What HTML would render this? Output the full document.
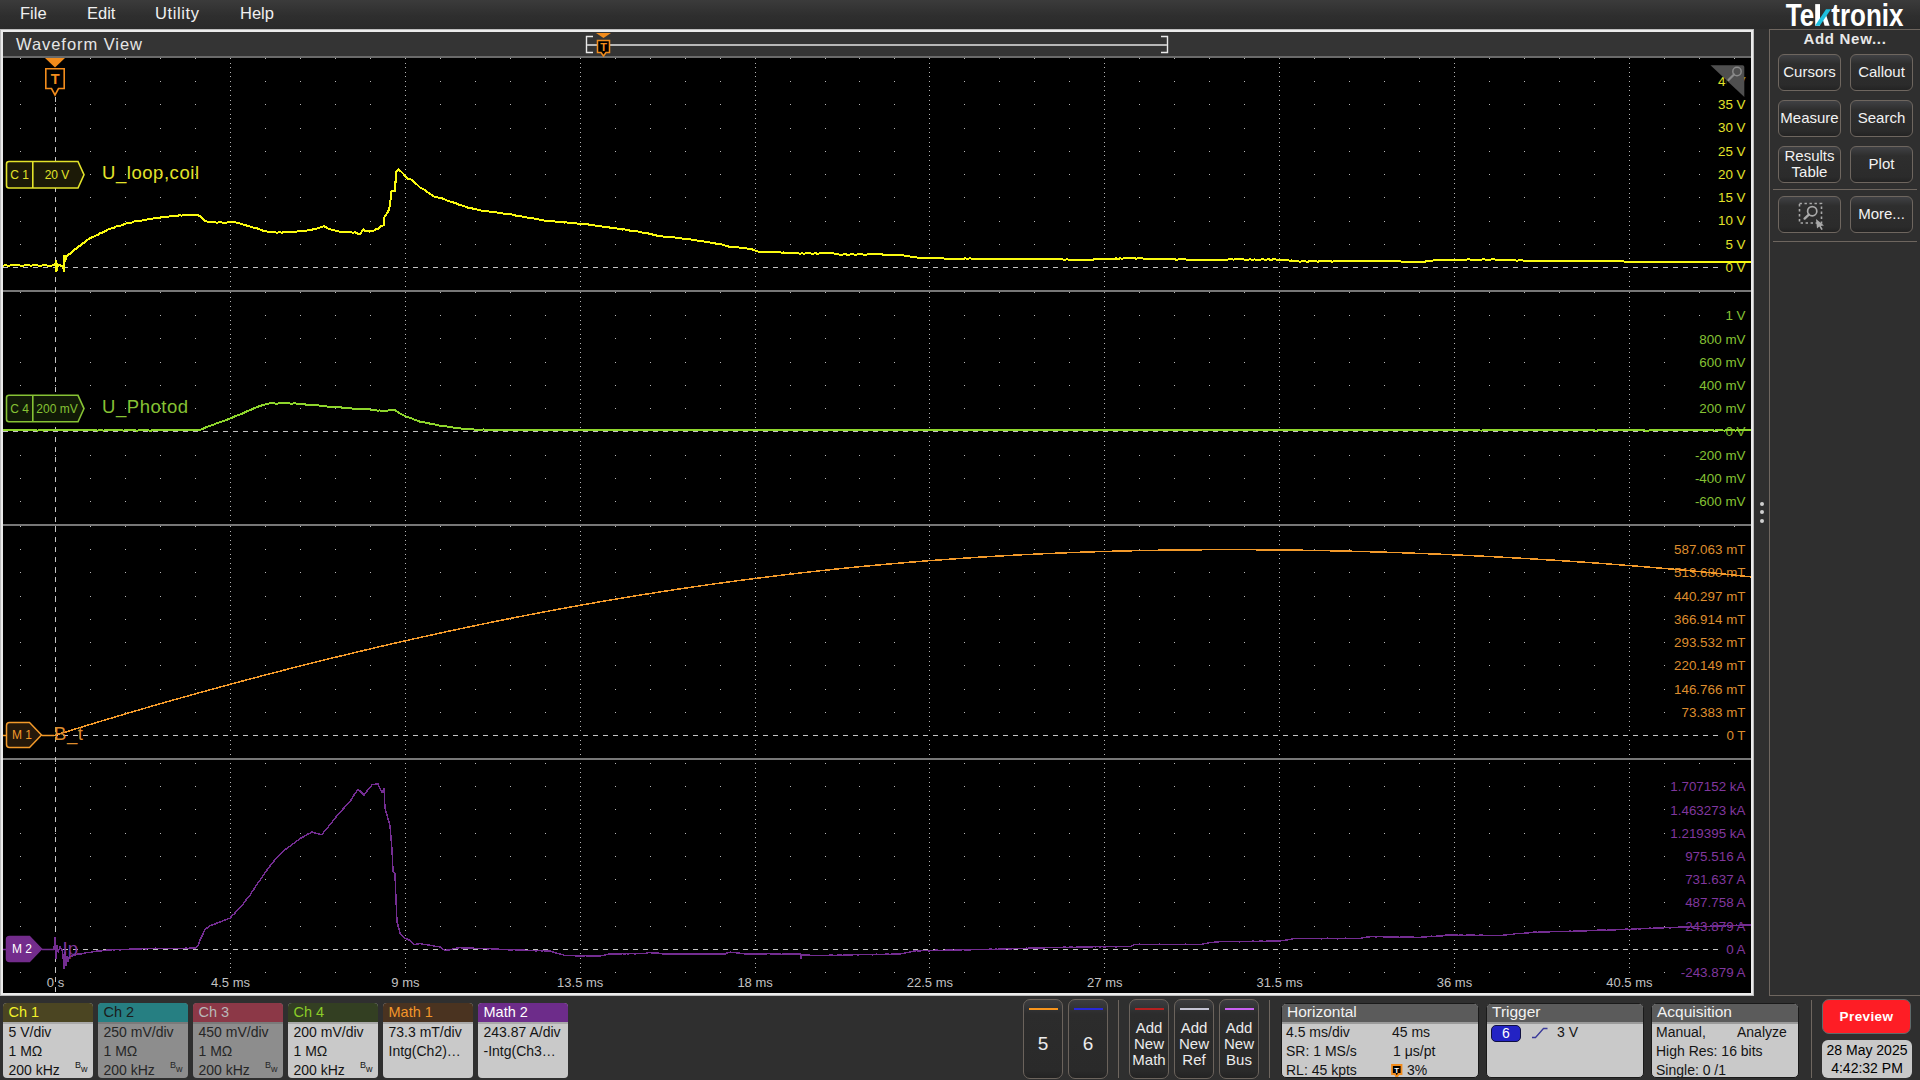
<!DOCTYPE html>
<html><head><meta charset="utf-8"><title>Tektronix Waveform View</title>
<style>
html,body{margin:0;padding:0}
body{width:1920px;height:1080px;background:#2f2f2f;position:relative;overflow:hidden;font-family:"Liberation Sans",sans-serif;color:#000}
.a{position:absolute}
.menu{left:0;top:0;width:1920px;height:29px;background:linear-gradient(#3b3b3b,#2e2e2e 55%,#2a2a2a)}
.mi{top:4px;font-size:16.5px;color:#f0f0f0}

.sbtn{width:63px;height:37px;box-sizing:border-box;border:1px solid #6e665f;border-radius:6px;background:linear-gradient(#404144 0px,#2e2e2e 9px,#2b2b2b 30px,#222 36px);color:#f2f2f2;font-size:15px;text-align:center}
.chb{top:1003px;width:90px;height:75px;border-radius:4px;overflow:hidden;color:#141414;font-size:14px}
.chh{position:absolute;left:0;top:0;width:90px;height:19px;padding-left:5.5px;box-sizing:border-box;line-height:18px;font-size:14.5px}
.chl{position:absolute;left:0;top:19px;width:90px;height:2px}
.chr{position:absolute;left:5.5px;line-height:19px;white-space:nowrap}
.bw{position:absolute;left:72px;top:58px;font-size:9px;line-height:9px}
.bw span{position:relative;top:4px;left:0px}
.abtn{top:999px;width:40px;height:80px;box-sizing:border-box;border:1px solid #6b635c;border-radius:7px;background:linear-gradient(#3c3d40 0px,#2c2c2c 14px,#2a2a2a 70px,#222 79px);color:#ececec;font-size:15px;text-align:center}
.abl{position:absolute;left:4.5px;top:7.5px;width:29px;height:2px}
.ip{top:1003px;height:75px;border-radius:5px;overflow:hidden;background:#c9c9c9;color:#141414;font-size:14px;border:1px solid #1a1a1a;box-sizing:border-box}
.iph{position:absolute;left:0;top:0;right:0;height:18px;background:#5b5b5b;color:#f2f2f2;font-size:15.5px;line-height:15px;padding-left:5px}
.ipl{position:absolute;left:0;top:18px;right:0;height:1.5px;background:#9a9a9a}
.ipr{position:absolute;line-height:19px;white-space:nowrap}
</style></head><body>
<div class="a menu"></div>
<div class="a mi" style="left:20px">File</div>
<div class="a mi" style="left:87px">Edit</div>
<div class="a mi" style="left:155px;letter-spacing:0.6px">Utility</div>
<div class="a mi" style="left:240px">Help</div>
<svg class="a" style="left:0;top:0" width="1920" height="1080" font-family='"Liberation Sans", sans-serif'>
<rect x="0" y="29" width="1754" height="967" fill="#bdbdbd"/>
<rect x="1" y="30" width="1752" height="965" fill="#ebebeb"/>
<rect x="3" y="32" width="1748" height="24" fill="#343434"/>
<rect x="3" y="56" width="1748" height="2" fill="#6a6a6a"/>
<rect x="3" y="58" width="1748" height="935" fill="#000"/>
<text x="16" y="49.5" fill="#e6e6e6" font-size="16.5" letter-spacing="0.95">Waveform View</text>
<path d="M593 36.5H586.5V52.5H593" fill="none" stroke="#e8e8e8" stroke-width="1.4"/>
<path d="M1161 36.5H1167.5V52.5H1161" fill="none" stroke="#e8e8e8" stroke-width="1.4"/>
<rect x="587" y="44" width="580" height="2" fill="#b8b8b8"/>
<path d="M596 33H611L603.5 38Z" fill="#f28c1c"/>
<path d="M597.5 40.5H609.5V52.5H606L603.5 56L601 52.5H597.5Z" fill="#000" stroke="#f28c1c" stroke-width="1.5"/>
<text x="603.5" y="51" fill="#f28c1c" font-size="11" font-weight="bold" text-anchor="middle">T</text>
<path d="M20 58h1v1h-1zM20 81h1v1h-1zM20 104h1v1h-1zM20 128h1v1h-1zM20 151h1v1h-1zM20 174h1v1h-1zM20 197h1v1h-1zM20 221h1v1h-1zM20 244h1v1h-1zM20 267h1v1h-1zM20 290h1v1h-1zM20 292h1v1h-1zM20 315h1v1h-1zM20 338h1v1h-1zM20 362h1v1h-1zM20 385h1v1h-1zM20 408h1v1h-1zM20 431h1v1h-1zM20 455h1v1h-1zM20 478h1v1h-1zM20 501h1v1h-1zM20 524h1v1h-1zM20 526h1v1h-1zM20 549h1v1h-1zM20 572h1v1h-1zM20 596h1v1h-1zM20 619h1v1h-1zM20 642h1v1h-1zM20 665h1v1h-1zM20 689h1v1h-1zM20 712h1v1h-1zM20 735h1v1h-1zM20 758h1v1h-1zM20 763h1v1h-1zM20 786h1v1h-1zM20 809h1v1h-1zM20 833h1v1h-1zM20 856h1v1h-1zM20 879h1v1h-1zM20 902h1v1h-1zM20 926h1v1h-1zM20 949h1v1h-1zM20 972h1v1h-1zM55 58h1v1h-1zM55 81h1v1h-1zM55 104h1v1h-1zM55 128h1v1h-1zM55 151h1v1h-1zM55 174h1v1h-1zM55 197h1v1h-1zM55 221h1v1h-1zM55 244h1v1h-1zM55 267h1v1h-1zM55 290h1v1h-1zM55 292h1v1h-1zM55 315h1v1h-1zM55 338h1v1h-1zM55 362h1v1h-1zM55 385h1v1h-1zM55 408h1v1h-1zM55 431h1v1h-1zM55 455h1v1h-1zM55 478h1v1h-1zM55 501h1v1h-1zM55 524h1v1h-1zM55 526h1v1h-1zM55 549h1v1h-1zM55 572h1v1h-1zM55 596h1v1h-1zM55 619h1v1h-1zM55 642h1v1h-1zM55 665h1v1h-1zM55 689h1v1h-1zM55 712h1v1h-1zM55 735h1v1h-1zM55 758h1v1h-1zM55 763h1v1h-1zM55 786h1v1h-1zM55 809h1v1h-1zM55 833h1v1h-1zM55 856h1v1h-1zM55 879h1v1h-1zM55 902h1v1h-1zM55 926h1v1h-1zM55 949h1v1h-1zM55 972h1v1h-1zM90 58h1v1h-1zM90 81h1v1h-1zM90 104h1v1h-1zM90 128h1v1h-1zM90 151h1v1h-1zM90 174h1v1h-1zM90 197h1v1h-1zM90 221h1v1h-1zM90 244h1v1h-1zM90 267h1v1h-1zM90 290h1v1h-1zM90 292h1v1h-1zM90 315h1v1h-1zM90 338h1v1h-1zM90 362h1v1h-1zM90 385h1v1h-1zM90 408h1v1h-1zM90 431h1v1h-1zM90 455h1v1h-1zM90 478h1v1h-1zM90 501h1v1h-1zM90 524h1v1h-1zM90 526h1v1h-1zM90 549h1v1h-1zM90 572h1v1h-1zM90 596h1v1h-1zM90 619h1v1h-1zM90 642h1v1h-1zM90 665h1v1h-1zM90 689h1v1h-1zM90 712h1v1h-1zM90 735h1v1h-1zM90 758h1v1h-1zM90 763h1v1h-1zM90 786h1v1h-1zM90 809h1v1h-1zM90 833h1v1h-1zM90 856h1v1h-1zM90 879h1v1h-1zM90 902h1v1h-1zM90 926h1v1h-1zM90 949h1v1h-1zM90 972h1v1h-1zM125 58h1v1h-1zM125 81h1v1h-1zM125 104h1v1h-1zM125 128h1v1h-1zM125 151h1v1h-1zM125 174h1v1h-1zM125 197h1v1h-1zM125 221h1v1h-1zM125 244h1v1h-1zM125 267h1v1h-1zM125 290h1v1h-1zM125 292h1v1h-1zM125 315h1v1h-1zM125 338h1v1h-1zM125 362h1v1h-1zM125 385h1v1h-1zM125 408h1v1h-1zM125 431h1v1h-1zM125 455h1v1h-1zM125 478h1v1h-1zM125 501h1v1h-1zM125 524h1v1h-1zM125 526h1v1h-1zM125 549h1v1h-1zM125 572h1v1h-1zM125 596h1v1h-1zM125 619h1v1h-1zM125 642h1v1h-1zM125 665h1v1h-1zM125 689h1v1h-1zM125 712h1v1h-1zM125 735h1v1h-1zM125 758h1v1h-1zM125 763h1v1h-1zM125 786h1v1h-1zM125 809h1v1h-1zM125 833h1v1h-1zM125 856h1v1h-1zM125 879h1v1h-1zM125 902h1v1h-1zM125 926h1v1h-1zM125 949h1v1h-1zM125 972h1v1h-1zM160 58h1v1h-1zM160 81h1v1h-1zM160 104h1v1h-1zM160 128h1v1h-1zM160 151h1v1h-1zM160 174h1v1h-1zM160 197h1v1h-1zM160 221h1v1h-1zM160 244h1v1h-1zM160 267h1v1h-1zM160 290h1v1h-1zM160 292h1v1h-1zM160 315h1v1h-1zM160 338h1v1h-1zM160 362h1v1h-1zM160 385h1v1h-1zM160 408h1v1h-1zM160 431h1v1h-1zM160 455h1v1h-1zM160 478h1v1h-1zM160 501h1v1h-1zM160 524h1v1h-1zM160 526h1v1h-1zM160 549h1v1h-1zM160 572h1v1h-1zM160 596h1v1h-1zM160 619h1v1h-1zM160 642h1v1h-1zM160 665h1v1h-1zM160 689h1v1h-1zM160 712h1v1h-1zM160 735h1v1h-1zM160 758h1v1h-1zM160 763h1v1h-1zM160 786h1v1h-1zM160 809h1v1h-1zM160 833h1v1h-1zM160 856h1v1h-1zM160 879h1v1h-1zM160 902h1v1h-1zM160 926h1v1h-1zM160 949h1v1h-1zM160 972h1v1h-1zM195 58h1v1h-1zM195 81h1v1h-1zM195 104h1v1h-1zM195 128h1v1h-1zM195 151h1v1h-1zM195 174h1v1h-1zM195 197h1v1h-1zM195 221h1v1h-1zM195 244h1v1h-1zM195 267h1v1h-1zM195 290h1v1h-1zM195 292h1v1h-1zM195 315h1v1h-1zM195 338h1v1h-1zM195 362h1v1h-1zM195 385h1v1h-1zM195 408h1v1h-1zM195 431h1v1h-1zM195 455h1v1h-1zM195 478h1v1h-1zM195 501h1v1h-1zM195 524h1v1h-1zM195 526h1v1h-1zM195 549h1v1h-1zM195 572h1v1h-1zM195 596h1v1h-1zM195 619h1v1h-1zM195 642h1v1h-1zM195 665h1v1h-1zM195 689h1v1h-1zM195 712h1v1h-1zM195 735h1v1h-1zM195 758h1v1h-1zM195 763h1v1h-1zM195 786h1v1h-1zM195 809h1v1h-1zM195 833h1v1h-1zM195 856h1v1h-1zM195 879h1v1h-1zM195 902h1v1h-1zM195 926h1v1h-1zM195 949h1v1h-1zM195 972h1v1h-1zM230 58h1v1h-1zM230 63h1v1h-1zM230 67h1v1h-1zM230 72h1v1h-1zM230 76h1v1h-1zM230 81h1v1h-1zM230 86h1v1h-1zM230 90h1v1h-1zM230 95h1v1h-1zM230 100h1v1h-1zM230 104h1v1h-1zM230 109h1v1h-1zM230 114h1v1h-1zM230 118h1v1h-1zM230 123h1v1h-1zM230 128h1v1h-1zM230 132h1v1h-1zM230 137h1v1h-1zM230 142h1v1h-1zM230 146h1v1h-1zM230 151h1v1h-1zM230 155h1v1h-1zM230 160h1v1h-1zM230 165h1v1h-1zM230 169h1v1h-1zM230 174h1v1h-1zM230 179h1v1h-1zM230 183h1v1h-1zM230 188h1v1h-1zM230 193h1v1h-1zM230 197h1v1h-1zM230 202h1v1h-1zM230 207h1v1h-1zM230 211h1v1h-1zM230 216h1v1h-1zM230 221h1v1h-1zM230 225h1v1h-1zM230 230h1v1h-1zM230 234h1v1h-1zM230 239h1v1h-1zM230 244h1v1h-1zM230 248h1v1h-1zM230 253h1v1h-1zM230 258h1v1h-1zM230 262h1v1h-1zM230 267h1v1h-1zM230 272h1v1h-1zM230 276h1v1h-1zM230 281h1v1h-1zM230 286h1v1h-1zM230 290h1v1h-1zM230 292h1v1h-1zM230 297h1v1h-1zM230 301h1v1h-1zM230 306h1v1h-1zM230 310h1v1h-1zM230 315h1v1h-1zM230 320h1v1h-1zM230 324h1v1h-1zM230 329h1v1h-1zM230 334h1v1h-1zM230 338h1v1h-1zM230 343h1v1h-1zM230 348h1v1h-1zM230 352h1v1h-1zM230 357h1v1h-1zM230 362h1v1h-1zM230 366h1v1h-1zM230 371h1v1h-1zM230 376h1v1h-1zM230 380h1v1h-1zM230 385h1v1h-1zM230 389h1v1h-1zM230 394h1v1h-1zM230 399h1v1h-1zM230 403h1v1h-1zM230 408h1v1h-1zM230 413h1v1h-1zM230 417h1v1h-1zM230 422h1v1h-1zM230 427h1v1h-1zM230 431h1v1h-1zM230 436h1v1h-1zM230 441h1v1h-1zM230 445h1v1h-1zM230 450h1v1h-1zM230 455h1v1h-1zM230 459h1v1h-1zM230 464h1v1h-1zM230 468h1v1h-1zM230 473h1v1h-1zM230 478h1v1h-1zM230 482h1v1h-1zM230 487h1v1h-1zM230 492h1v1h-1zM230 496h1v1h-1zM230 501h1v1h-1zM230 506h1v1h-1zM230 510h1v1h-1zM230 515h1v1h-1zM230 520h1v1h-1zM230 524h1v1h-1zM230 526h1v1h-1zM230 531h1v1h-1zM230 535h1v1h-1zM230 540h1v1h-1zM230 544h1v1h-1zM230 549h1v1h-1zM230 554h1v1h-1zM230 558h1v1h-1zM230 563h1v1h-1zM230 568h1v1h-1zM230 572h1v1h-1zM230 577h1v1h-1zM230 582h1v1h-1zM230 586h1v1h-1zM230 591h1v1h-1zM230 596h1v1h-1zM230 600h1v1h-1zM230 605h1v1h-1zM230 610h1v1h-1zM230 614h1v1h-1zM230 619h1v1h-1zM230 623h1v1h-1zM230 628h1v1h-1zM230 633h1v1h-1zM230 637h1v1h-1zM230 642h1v1h-1zM230 647h1v1h-1zM230 651h1v1h-1zM230 656h1v1h-1zM230 661h1v1h-1zM230 665h1v1h-1zM230 670h1v1h-1zM230 675h1v1h-1zM230 679h1v1h-1zM230 684h1v1h-1zM230 689h1v1h-1zM230 693h1v1h-1zM230 698h1v1h-1zM230 702h1v1h-1zM230 707h1v1h-1zM230 712h1v1h-1zM230 716h1v1h-1zM230 721h1v1h-1zM230 726h1v1h-1zM230 730h1v1h-1zM230 735h1v1h-1zM230 740h1v1h-1zM230 744h1v1h-1zM230 749h1v1h-1zM230 754h1v1h-1zM230 758h1v1h-1zM230 763h1v1h-1zM230 768h1v1h-1zM230 772h1v1h-1zM230 777h1v1h-1zM230 782h1v1h-1zM230 786h1v1h-1zM230 791h1v1h-1zM230 796h1v1h-1zM230 800h1v1h-1zM230 805h1v1h-1zM230 809h1v1h-1zM230 814h1v1h-1zM230 819h1v1h-1zM230 823h1v1h-1zM230 828h1v1h-1zM230 833h1v1h-1zM230 837h1v1h-1zM230 842h1v1h-1zM230 847h1v1h-1zM230 851h1v1h-1zM230 856h1v1h-1zM230 861h1v1h-1zM230 865h1v1h-1zM230 870h1v1h-1zM230 875h1v1h-1zM230 879h1v1h-1zM230 884h1v1h-1zM230 888h1v1h-1zM230 893h1v1h-1zM230 898h1v1h-1zM230 902h1v1h-1zM230 907h1v1h-1zM230 912h1v1h-1zM230 916h1v1h-1zM230 921h1v1h-1zM230 926h1v1h-1zM230 930h1v1h-1zM230 935h1v1h-1zM230 940h1v1h-1zM230 944h1v1h-1zM230 949h1v1h-1zM230 953h1v1h-1zM230 958h1v1h-1zM230 963h1v1h-1zM230 967h1v1h-1zM230 972h1v1h-1zM265 58h1v1h-1zM265 81h1v1h-1zM265 104h1v1h-1zM265 128h1v1h-1zM265 151h1v1h-1zM265 174h1v1h-1zM265 197h1v1h-1zM265 221h1v1h-1zM265 244h1v1h-1zM265 267h1v1h-1zM265 290h1v1h-1zM265 292h1v1h-1zM265 315h1v1h-1zM265 338h1v1h-1zM265 362h1v1h-1zM265 385h1v1h-1zM265 408h1v1h-1zM265 431h1v1h-1zM265 455h1v1h-1zM265 478h1v1h-1zM265 501h1v1h-1zM265 524h1v1h-1zM265 526h1v1h-1zM265 549h1v1h-1zM265 572h1v1h-1zM265 596h1v1h-1zM265 619h1v1h-1zM265 642h1v1h-1zM265 665h1v1h-1zM265 689h1v1h-1zM265 712h1v1h-1zM265 735h1v1h-1zM265 758h1v1h-1zM265 763h1v1h-1zM265 786h1v1h-1zM265 809h1v1h-1zM265 833h1v1h-1zM265 856h1v1h-1zM265 879h1v1h-1zM265 902h1v1h-1zM265 926h1v1h-1zM265 949h1v1h-1zM265 972h1v1h-1zM300 58h1v1h-1zM300 81h1v1h-1zM300 104h1v1h-1zM300 128h1v1h-1zM300 151h1v1h-1zM300 174h1v1h-1zM300 197h1v1h-1zM300 221h1v1h-1zM300 244h1v1h-1zM300 267h1v1h-1zM300 290h1v1h-1zM300 292h1v1h-1zM300 315h1v1h-1zM300 338h1v1h-1zM300 362h1v1h-1zM300 385h1v1h-1zM300 408h1v1h-1zM300 431h1v1h-1zM300 455h1v1h-1zM300 478h1v1h-1zM300 501h1v1h-1zM300 524h1v1h-1zM300 526h1v1h-1zM300 549h1v1h-1zM300 572h1v1h-1zM300 596h1v1h-1zM300 619h1v1h-1zM300 642h1v1h-1zM300 665h1v1h-1zM300 689h1v1h-1zM300 712h1v1h-1zM300 735h1v1h-1zM300 758h1v1h-1zM300 763h1v1h-1zM300 786h1v1h-1zM300 809h1v1h-1zM300 833h1v1h-1zM300 856h1v1h-1zM300 879h1v1h-1zM300 902h1v1h-1zM300 926h1v1h-1zM300 949h1v1h-1zM300 972h1v1h-1zM335 58h1v1h-1zM335 81h1v1h-1zM335 104h1v1h-1zM335 128h1v1h-1zM335 151h1v1h-1zM335 174h1v1h-1zM335 197h1v1h-1zM335 221h1v1h-1zM335 244h1v1h-1zM335 267h1v1h-1zM335 290h1v1h-1zM335 292h1v1h-1zM335 315h1v1h-1zM335 338h1v1h-1zM335 362h1v1h-1zM335 385h1v1h-1zM335 408h1v1h-1zM335 431h1v1h-1zM335 455h1v1h-1zM335 478h1v1h-1zM335 501h1v1h-1zM335 524h1v1h-1zM335 526h1v1h-1zM335 549h1v1h-1zM335 572h1v1h-1zM335 596h1v1h-1zM335 619h1v1h-1zM335 642h1v1h-1zM335 665h1v1h-1zM335 689h1v1h-1zM335 712h1v1h-1zM335 735h1v1h-1zM335 758h1v1h-1zM335 763h1v1h-1zM335 786h1v1h-1zM335 809h1v1h-1zM335 833h1v1h-1zM335 856h1v1h-1zM335 879h1v1h-1zM335 902h1v1h-1zM335 926h1v1h-1zM335 949h1v1h-1zM335 972h1v1h-1zM370 58h1v1h-1zM370 81h1v1h-1zM370 104h1v1h-1zM370 128h1v1h-1zM370 151h1v1h-1zM370 174h1v1h-1zM370 197h1v1h-1zM370 221h1v1h-1zM370 244h1v1h-1zM370 267h1v1h-1zM370 290h1v1h-1zM370 292h1v1h-1zM370 315h1v1h-1zM370 338h1v1h-1zM370 362h1v1h-1zM370 385h1v1h-1zM370 408h1v1h-1zM370 431h1v1h-1zM370 455h1v1h-1zM370 478h1v1h-1zM370 501h1v1h-1zM370 524h1v1h-1zM370 526h1v1h-1zM370 549h1v1h-1zM370 572h1v1h-1zM370 596h1v1h-1zM370 619h1v1h-1zM370 642h1v1h-1zM370 665h1v1h-1zM370 689h1v1h-1zM370 712h1v1h-1zM370 735h1v1h-1zM370 758h1v1h-1zM370 763h1v1h-1zM370 786h1v1h-1zM370 809h1v1h-1zM370 833h1v1h-1zM370 856h1v1h-1zM370 879h1v1h-1zM370 902h1v1h-1zM370 926h1v1h-1zM370 949h1v1h-1zM370 972h1v1h-1zM405 58h1v1h-1zM405 63h1v1h-1zM405 67h1v1h-1zM405 72h1v1h-1zM405 76h1v1h-1zM405 81h1v1h-1zM405 86h1v1h-1zM405 90h1v1h-1zM405 95h1v1h-1zM405 100h1v1h-1zM405 104h1v1h-1zM405 109h1v1h-1zM405 114h1v1h-1zM405 118h1v1h-1zM405 123h1v1h-1zM405 128h1v1h-1zM405 132h1v1h-1zM405 137h1v1h-1zM405 142h1v1h-1zM405 146h1v1h-1zM405 151h1v1h-1zM405 155h1v1h-1zM405 160h1v1h-1zM405 165h1v1h-1zM405 169h1v1h-1zM405 174h1v1h-1zM405 179h1v1h-1zM405 183h1v1h-1zM405 188h1v1h-1zM405 193h1v1h-1zM405 197h1v1h-1zM405 202h1v1h-1zM405 207h1v1h-1zM405 211h1v1h-1zM405 216h1v1h-1zM405 221h1v1h-1zM405 225h1v1h-1zM405 230h1v1h-1zM405 234h1v1h-1zM405 239h1v1h-1zM405 244h1v1h-1zM405 248h1v1h-1zM405 253h1v1h-1zM405 258h1v1h-1zM405 262h1v1h-1zM405 267h1v1h-1zM405 272h1v1h-1zM405 276h1v1h-1zM405 281h1v1h-1zM405 286h1v1h-1zM405 290h1v1h-1zM405 292h1v1h-1zM405 297h1v1h-1zM405 301h1v1h-1zM405 306h1v1h-1zM405 310h1v1h-1zM405 315h1v1h-1zM405 320h1v1h-1zM405 324h1v1h-1zM405 329h1v1h-1zM405 334h1v1h-1zM405 338h1v1h-1zM405 343h1v1h-1zM405 348h1v1h-1zM405 352h1v1h-1zM405 357h1v1h-1zM405 362h1v1h-1zM405 366h1v1h-1zM405 371h1v1h-1zM405 376h1v1h-1zM405 380h1v1h-1zM405 385h1v1h-1zM405 389h1v1h-1zM405 394h1v1h-1zM405 399h1v1h-1zM405 403h1v1h-1zM405 408h1v1h-1zM405 413h1v1h-1zM405 417h1v1h-1zM405 422h1v1h-1zM405 427h1v1h-1zM405 431h1v1h-1zM405 436h1v1h-1zM405 441h1v1h-1zM405 445h1v1h-1zM405 450h1v1h-1zM405 455h1v1h-1zM405 459h1v1h-1zM405 464h1v1h-1zM405 468h1v1h-1zM405 473h1v1h-1zM405 478h1v1h-1zM405 482h1v1h-1zM405 487h1v1h-1zM405 492h1v1h-1zM405 496h1v1h-1zM405 501h1v1h-1zM405 506h1v1h-1zM405 510h1v1h-1zM405 515h1v1h-1zM405 520h1v1h-1zM405 524h1v1h-1zM405 526h1v1h-1zM405 531h1v1h-1zM405 535h1v1h-1zM405 540h1v1h-1zM405 544h1v1h-1zM405 549h1v1h-1zM405 554h1v1h-1zM405 558h1v1h-1zM405 563h1v1h-1zM405 568h1v1h-1zM405 572h1v1h-1zM405 577h1v1h-1zM405 582h1v1h-1zM405 586h1v1h-1zM405 591h1v1h-1zM405 596h1v1h-1zM405 600h1v1h-1zM405 605h1v1h-1zM405 610h1v1h-1zM405 614h1v1h-1zM405 619h1v1h-1zM405 623h1v1h-1zM405 628h1v1h-1zM405 633h1v1h-1zM405 637h1v1h-1zM405 642h1v1h-1zM405 647h1v1h-1zM405 651h1v1h-1zM405 656h1v1h-1zM405 661h1v1h-1zM405 665h1v1h-1zM405 670h1v1h-1zM405 675h1v1h-1zM405 679h1v1h-1zM405 684h1v1h-1zM405 689h1v1h-1zM405 693h1v1h-1zM405 698h1v1h-1zM405 702h1v1h-1zM405 707h1v1h-1zM405 712h1v1h-1zM405 716h1v1h-1zM405 721h1v1h-1zM405 726h1v1h-1zM405 730h1v1h-1zM405 735h1v1h-1zM405 740h1v1h-1zM405 744h1v1h-1zM405 749h1v1h-1zM405 754h1v1h-1zM405 758h1v1h-1zM405 763h1v1h-1zM405 768h1v1h-1zM405 772h1v1h-1zM405 777h1v1h-1zM405 782h1v1h-1zM405 786h1v1h-1zM405 791h1v1h-1zM405 796h1v1h-1zM405 800h1v1h-1zM405 805h1v1h-1zM405 809h1v1h-1zM405 814h1v1h-1zM405 819h1v1h-1zM405 823h1v1h-1zM405 828h1v1h-1zM405 833h1v1h-1zM405 837h1v1h-1zM405 842h1v1h-1zM405 847h1v1h-1zM405 851h1v1h-1zM405 856h1v1h-1zM405 861h1v1h-1zM405 865h1v1h-1zM405 870h1v1h-1zM405 875h1v1h-1zM405 879h1v1h-1zM405 884h1v1h-1zM405 888h1v1h-1zM405 893h1v1h-1zM405 898h1v1h-1zM405 902h1v1h-1zM405 907h1v1h-1zM405 912h1v1h-1zM405 916h1v1h-1zM405 921h1v1h-1zM405 926h1v1h-1zM405 930h1v1h-1zM405 935h1v1h-1zM405 940h1v1h-1zM405 944h1v1h-1zM405 949h1v1h-1zM405 953h1v1h-1zM405 958h1v1h-1zM405 963h1v1h-1zM405 967h1v1h-1zM405 972h1v1h-1zM440 58h1v1h-1zM440 81h1v1h-1zM440 104h1v1h-1zM440 128h1v1h-1zM440 151h1v1h-1zM440 174h1v1h-1zM440 197h1v1h-1zM440 221h1v1h-1zM440 244h1v1h-1zM440 267h1v1h-1zM440 290h1v1h-1zM440 292h1v1h-1zM440 315h1v1h-1zM440 338h1v1h-1zM440 362h1v1h-1zM440 385h1v1h-1zM440 408h1v1h-1zM440 431h1v1h-1zM440 455h1v1h-1zM440 478h1v1h-1zM440 501h1v1h-1zM440 524h1v1h-1zM440 526h1v1h-1zM440 549h1v1h-1zM440 572h1v1h-1zM440 596h1v1h-1zM440 619h1v1h-1zM440 642h1v1h-1zM440 665h1v1h-1zM440 689h1v1h-1zM440 712h1v1h-1zM440 735h1v1h-1zM440 758h1v1h-1zM440 763h1v1h-1zM440 786h1v1h-1zM440 809h1v1h-1zM440 833h1v1h-1zM440 856h1v1h-1zM440 879h1v1h-1zM440 902h1v1h-1zM440 926h1v1h-1zM440 949h1v1h-1zM440 972h1v1h-1zM475 58h1v1h-1zM475 81h1v1h-1zM475 104h1v1h-1zM475 128h1v1h-1zM475 151h1v1h-1zM475 174h1v1h-1zM475 197h1v1h-1zM475 221h1v1h-1zM475 244h1v1h-1zM475 267h1v1h-1zM475 290h1v1h-1zM475 292h1v1h-1zM475 315h1v1h-1zM475 338h1v1h-1zM475 362h1v1h-1zM475 385h1v1h-1zM475 408h1v1h-1zM475 431h1v1h-1zM475 455h1v1h-1zM475 478h1v1h-1zM475 501h1v1h-1zM475 524h1v1h-1zM475 526h1v1h-1zM475 549h1v1h-1zM475 572h1v1h-1zM475 596h1v1h-1zM475 619h1v1h-1zM475 642h1v1h-1zM475 665h1v1h-1zM475 689h1v1h-1zM475 712h1v1h-1zM475 735h1v1h-1zM475 758h1v1h-1zM475 763h1v1h-1zM475 786h1v1h-1zM475 809h1v1h-1zM475 833h1v1h-1zM475 856h1v1h-1zM475 879h1v1h-1zM475 902h1v1h-1zM475 926h1v1h-1zM475 949h1v1h-1zM475 972h1v1h-1zM510 58h1v1h-1zM510 81h1v1h-1zM510 104h1v1h-1zM510 128h1v1h-1zM510 151h1v1h-1zM510 174h1v1h-1zM510 197h1v1h-1zM510 221h1v1h-1zM510 244h1v1h-1zM510 267h1v1h-1zM510 290h1v1h-1zM510 292h1v1h-1zM510 315h1v1h-1zM510 338h1v1h-1zM510 362h1v1h-1zM510 385h1v1h-1zM510 408h1v1h-1zM510 431h1v1h-1zM510 455h1v1h-1zM510 478h1v1h-1zM510 501h1v1h-1zM510 524h1v1h-1zM510 526h1v1h-1zM510 549h1v1h-1zM510 572h1v1h-1zM510 596h1v1h-1zM510 619h1v1h-1zM510 642h1v1h-1zM510 665h1v1h-1zM510 689h1v1h-1zM510 712h1v1h-1zM510 735h1v1h-1zM510 758h1v1h-1zM510 763h1v1h-1zM510 786h1v1h-1zM510 809h1v1h-1zM510 833h1v1h-1zM510 856h1v1h-1zM510 879h1v1h-1zM510 902h1v1h-1zM510 926h1v1h-1zM510 949h1v1h-1zM510 972h1v1h-1zM545 58h1v1h-1zM545 81h1v1h-1zM545 104h1v1h-1zM545 128h1v1h-1zM545 151h1v1h-1zM545 174h1v1h-1zM545 197h1v1h-1zM545 221h1v1h-1zM545 244h1v1h-1zM545 267h1v1h-1zM545 290h1v1h-1zM545 292h1v1h-1zM545 315h1v1h-1zM545 338h1v1h-1zM545 362h1v1h-1zM545 385h1v1h-1zM545 408h1v1h-1zM545 431h1v1h-1zM545 455h1v1h-1zM545 478h1v1h-1zM545 501h1v1h-1zM545 524h1v1h-1zM545 526h1v1h-1zM545 549h1v1h-1zM545 572h1v1h-1zM545 596h1v1h-1zM545 619h1v1h-1zM545 642h1v1h-1zM545 665h1v1h-1zM545 689h1v1h-1zM545 712h1v1h-1zM545 735h1v1h-1zM545 758h1v1h-1zM545 763h1v1h-1zM545 786h1v1h-1zM545 809h1v1h-1zM545 833h1v1h-1zM545 856h1v1h-1zM545 879h1v1h-1zM545 902h1v1h-1zM545 926h1v1h-1zM545 949h1v1h-1zM545 972h1v1h-1zM580 58h1v1h-1zM580 63h1v1h-1zM580 67h1v1h-1zM580 72h1v1h-1zM580 76h1v1h-1zM580 81h1v1h-1zM580 86h1v1h-1zM580 90h1v1h-1zM580 95h1v1h-1zM580 100h1v1h-1zM580 104h1v1h-1zM580 109h1v1h-1zM580 114h1v1h-1zM580 118h1v1h-1zM580 123h1v1h-1zM580 128h1v1h-1zM580 132h1v1h-1zM580 137h1v1h-1zM580 142h1v1h-1zM580 146h1v1h-1zM580 151h1v1h-1zM580 155h1v1h-1zM580 160h1v1h-1zM580 165h1v1h-1zM580 169h1v1h-1zM580 174h1v1h-1zM580 179h1v1h-1zM580 183h1v1h-1zM580 188h1v1h-1zM580 193h1v1h-1zM580 197h1v1h-1zM580 202h1v1h-1zM580 207h1v1h-1zM580 211h1v1h-1zM580 216h1v1h-1zM580 221h1v1h-1zM580 225h1v1h-1zM580 230h1v1h-1zM580 234h1v1h-1zM580 239h1v1h-1zM580 244h1v1h-1zM580 248h1v1h-1zM580 253h1v1h-1zM580 258h1v1h-1zM580 262h1v1h-1zM580 267h1v1h-1zM580 272h1v1h-1zM580 276h1v1h-1zM580 281h1v1h-1zM580 286h1v1h-1zM580 290h1v1h-1zM580 292h1v1h-1zM580 297h1v1h-1zM580 301h1v1h-1zM580 306h1v1h-1zM580 310h1v1h-1zM580 315h1v1h-1zM580 320h1v1h-1zM580 324h1v1h-1zM580 329h1v1h-1zM580 334h1v1h-1zM580 338h1v1h-1zM580 343h1v1h-1zM580 348h1v1h-1zM580 352h1v1h-1zM580 357h1v1h-1zM580 362h1v1h-1zM580 366h1v1h-1zM580 371h1v1h-1zM580 376h1v1h-1zM580 380h1v1h-1zM580 385h1v1h-1zM580 389h1v1h-1zM580 394h1v1h-1zM580 399h1v1h-1zM580 403h1v1h-1zM580 408h1v1h-1zM580 413h1v1h-1zM580 417h1v1h-1zM580 422h1v1h-1zM580 427h1v1h-1zM580 431h1v1h-1zM580 436h1v1h-1zM580 441h1v1h-1zM580 445h1v1h-1zM580 450h1v1h-1zM580 455h1v1h-1zM580 459h1v1h-1zM580 464h1v1h-1zM580 468h1v1h-1zM580 473h1v1h-1zM580 478h1v1h-1zM580 482h1v1h-1zM580 487h1v1h-1zM580 492h1v1h-1zM580 496h1v1h-1zM580 501h1v1h-1zM580 506h1v1h-1zM580 510h1v1h-1zM580 515h1v1h-1zM580 520h1v1h-1zM580 524h1v1h-1zM580 526h1v1h-1zM580 531h1v1h-1zM580 535h1v1h-1zM580 540h1v1h-1zM580 544h1v1h-1zM580 549h1v1h-1zM580 554h1v1h-1zM580 558h1v1h-1zM580 563h1v1h-1zM580 568h1v1h-1zM580 572h1v1h-1zM580 577h1v1h-1zM580 582h1v1h-1zM580 586h1v1h-1zM580 591h1v1h-1zM580 596h1v1h-1zM580 600h1v1h-1zM580 605h1v1h-1zM580 610h1v1h-1zM580 614h1v1h-1zM580 619h1v1h-1zM580 623h1v1h-1zM580 628h1v1h-1zM580 633h1v1h-1zM580 637h1v1h-1zM580 642h1v1h-1zM580 647h1v1h-1zM580 651h1v1h-1zM580 656h1v1h-1zM580 661h1v1h-1zM580 665h1v1h-1zM580 670h1v1h-1zM580 675h1v1h-1zM580 679h1v1h-1zM580 684h1v1h-1zM580 689h1v1h-1zM580 693h1v1h-1zM580 698h1v1h-1zM580 702h1v1h-1zM580 707h1v1h-1zM580 712h1v1h-1zM580 716h1v1h-1zM580 721h1v1h-1zM580 726h1v1h-1zM580 730h1v1h-1zM580 735h1v1h-1zM580 740h1v1h-1zM580 744h1v1h-1zM580 749h1v1h-1zM580 754h1v1h-1zM580 758h1v1h-1zM580 763h1v1h-1zM580 768h1v1h-1zM580 772h1v1h-1zM580 777h1v1h-1zM580 782h1v1h-1zM580 786h1v1h-1zM580 791h1v1h-1zM580 796h1v1h-1zM580 800h1v1h-1zM580 805h1v1h-1zM580 809h1v1h-1zM580 814h1v1h-1zM580 819h1v1h-1zM580 823h1v1h-1zM580 828h1v1h-1zM580 833h1v1h-1zM580 837h1v1h-1zM580 842h1v1h-1zM580 847h1v1h-1zM580 851h1v1h-1zM580 856h1v1h-1zM580 861h1v1h-1zM580 865h1v1h-1zM580 870h1v1h-1zM580 875h1v1h-1zM580 879h1v1h-1zM580 884h1v1h-1zM580 888h1v1h-1zM580 893h1v1h-1zM580 898h1v1h-1zM580 902h1v1h-1zM580 907h1v1h-1zM580 912h1v1h-1zM580 916h1v1h-1zM580 921h1v1h-1zM580 926h1v1h-1zM580 930h1v1h-1zM580 935h1v1h-1zM580 940h1v1h-1zM580 944h1v1h-1zM580 949h1v1h-1zM580 953h1v1h-1zM580 958h1v1h-1zM580 963h1v1h-1zM580 967h1v1h-1zM580 972h1v1h-1zM615 58h1v1h-1zM615 81h1v1h-1zM615 104h1v1h-1zM615 128h1v1h-1zM615 151h1v1h-1zM615 174h1v1h-1zM615 197h1v1h-1zM615 221h1v1h-1zM615 244h1v1h-1zM615 267h1v1h-1zM615 290h1v1h-1zM615 292h1v1h-1zM615 315h1v1h-1zM615 338h1v1h-1zM615 362h1v1h-1zM615 385h1v1h-1zM615 408h1v1h-1zM615 431h1v1h-1zM615 455h1v1h-1zM615 478h1v1h-1zM615 501h1v1h-1zM615 524h1v1h-1zM615 526h1v1h-1zM615 549h1v1h-1zM615 572h1v1h-1zM615 596h1v1h-1zM615 619h1v1h-1zM615 642h1v1h-1zM615 665h1v1h-1zM615 689h1v1h-1zM615 712h1v1h-1zM615 735h1v1h-1zM615 758h1v1h-1zM615 763h1v1h-1zM615 786h1v1h-1zM615 809h1v1h-1zM615 833h1v1h-1zM615 856h1v1h-1zM615 879h1v1h-1zM615 902h1v1h-1zM615 926h1v1h-1zM615 949h1v1h-1zM615 972h1v1h-1zM650 58h1v1h-1zM650 81h1v1h-1zM650 104h1v1h-1zM650 128h1v1h-1zM650 151h1v1h-1zM650 174h1v1h-1zM650 197h1v1h-1zM650 221h1v1h-1zM650 244h1v1h-1zM650 267h1v1h-1zM650 290h1v1h-1zM650 292h1v1h-1zM650 315h1v1h-1zM650 338h1v1h-1zM650 362h1v1h-1zM650 385h1v1h-1zM650 408h1v1h-1zM650 431h1v1h-1zM650 455h1v1h-1zM650 478h1v1h-1zM650 501h1v1h-1zM650 524h1v1h-1zM650 526h1v1h-1zM650 549h1v1h-1zM650 572h1v1h-1zM650 596h1v1h-1zM650 619h1v1h-1zM650 642h1v1h-1zM650 665h1v1h-1zM650 689h1v1h-1zM650 712h1v1h-1zM650 735h1v1h-1zM650 758h1v1h-1zM650 763h1v1h-1zM650 786h1v1h-1zM650 809h1v1h-1zM650 833h1v1h-1zM650 856h1v1h-1zM650 879h1v1h-1zM650 902h1v1h-1zM650 926h1v1h-1zM650 949h1v1h-1zM650 972h1v1h-1zM685 58h1v1h-1zM685 81h1v1h-1zM685 104h1v1h-1zM685 128h1v1h-1zM685 151h1v1h-1zM685 174h1v1h-1zM685 197h1v1h-1zM685 221h1v1h-1zM685 244h1v1h-1zM685 267h1v1h-1zM685 290h1v1h-1zM685 292h1v1h-1zM685 315h1v1h-1zM685 338h1v1h-1zM685 362h1v1h-1zM685 385h1v1h-1zM685 408h1v1h-1zM685 431h1v1h-1zM685 455h1v1h-1zM685 478h1v1h-1zM685 501h1v1h-1zM685 524h1v1h-1zM685 526h1v1h-1zM685 549h1v1h-1zM685 572h1v1h-1zM685 596h1v1h-1zM685 619h1v1h-1zM685 642h1v1h-1zM685 665h1v1h-1zM685 689h1v1h-1zM685 712h1v1h-1zM685 735h1v1h-1zM685 758h1v1h-1zM685 763h1v1h-1zM685 786h1v1h-1zM685 809h1v1h-1zM685 833h1v1h-1zM685 856h1v1h-1zM685 879h1v1h-1zM685 902h1v1h-1zM685 926h1v1h-1zM685 949h1v1h-1zM685 972h1v1h-1zM720 58h1v1h-1zM720 81h1v1h-1zM720 104h1v1h-1zM720 128h1v1h-1zM720 151h1v1h-1zM720 174h1v1h-1zM720 197h1v1h-1zM720 221h1v1h-1zM720 244h1v1h-1zM720 267h1v1h-1zM720 290h1v1h-1zM720 292h1v1h-1zM720 315h1v1h-1zM720 338h1v1h-1zM720 362h1v1h-1zM720 385h1v1h-1zM720 408h1v1h-1zM720 431h1v1h-1zM720 455h1v1h-1zM720 478h1v1h-1zM720 501h1v1h-1zM720 524h1v1h-1zM720 526h1v1h-1zM720 549h1v1h-1zM720 572h1v1h-1zM720 596h1v1h-1zM720 619h1v1h-1zM720 642h1v1h-1zM720 665h1v1h-1zM720 689h1v1h-1zM720 712h1v1h-1zM720 735h1v1h-1zM720 758h1v1h-1zM720 763h1v1h-1zM720 786h1v1h-1zM720 809h1v1h-1zM720 833h1v1h-1zM720 856h1v1h-1zM720 879h1v1h-1zM720 902h1v1h-1zM720 926h1v1h-1zM720 949h1v1h-1zM720 972h1v1h-1zM755 58h1v1h-1zM755 63h1v1h-1zM755 67h1v1h-1zM755 72h1v1h-1zM755 76h1v1h-1zM755 81h1v1h-1zM755 86h1v1h-1zM755 90h1v1h-1zM755 95h1v1h-1zM755 100h1v1h-1zM755 104h1v1h-1zM755 109h1v1h-1zM755 114h1v1h-1zM755 118h1v1h-1zM755 123h1v1h-1zM755 128h1v1h-1zM755 132h1v1h-1zM755 137h1v1h-1zM755 142h1v1h-1zM755 146h1v1h-1zM755 151h1v1h-1zM755 155h1v1h-1zM755 160h1v1h-1zM755 165h1v1h-1zM755 169h1v1h-1zM755 174h1v1h-1zM755 179h1v1h-1zM755 183h1v1h-1zM755 188h1v1h-1zM755 193h1v1h-1zM755 197h1v1h-1zM755 202h1v1h-1zM755 207h1v1h-1zM755 211h1v1h-1zM755 216h1v1h-1zM755 221h1v1h-1zM755 225h1v1h-1zM755 230h1v1h-1zM755 234h1v1h-1zM755 239h1v1h-1zM755 244h1v1h-1zM755 248h1v1h-1zM755 253h1v1h-1zM755 258h1v1h-1zM755 262h1v1h-1zM755 267h1v1h-1zM755 272h1v1h-1zM755 276h1v1h-1zM755 281h1v1h-1zM755 286h1v1h-1zM755 290h1v1h-1zM755 292h1v1h-1zM755 297h1v1h-1zM755 301h1v1h-1zM755 306h1v1h-1zM755 310h1v1h-1zM755 315h1v1h-1zM755 320h1v1h-1zM755 324h1v1h-1zM755 329h1v1h-1zM755 334h1v1h-1zM755 338h1v1h-1zM755 343h1v1h-1zM755 348h1v1h-1zM755 352h1v1h-1zM755 357h1v1h-1zM755 362h1v1h-1zM755 366h1v1h-1zM755 371h1v1h-1zM755 376h1v1h-1zM755 380h1v1h-1zM755 385h1v1h-1zM755 389h1v1h-1zM755 394h1v1h-1zM755 399h1v1h-1zM755 403h1v1h-1zM755 408h1v1h-1zM755 413h1v1h-1zM755 417h1v1h-1zM755 422h1v1h-1zM755 427h1v1h-1zM755 431h1v1h-1zM755 436h1v1h-1zM755 441h1v1h-1zM755 445h1v1h-1zM755 450h1v1h-1zM755 455h1v1h-1zM755 459h1v1h-1zM755 464h1v1h-1zM755 468h1v1h-1zM755 473h1v1h-1zM755 478h1v1h-1zM755 482h1v1h-1zM755 487h1v1h-1zM755 492h1v1h-1zM755 496h1v1h-1zM755 501h1v1h-1zM755 506h1v1h-1zM755 510h1v1h-1zM755 515h1v1h-1zM755 520h1v1h-1zM755 524h1v1h-1zM755 526h1v1h-1zM755 531h1v1h-1zM755 535h1v1h-1zM755 540h1v1h-1zM755 544h1v1h-1zM755 549h1v1h-1zM755 554h1v1h-1zM755 558h1v1h-1zM755 563h1v1h-1zM755 568h1v1h-1zM755 572h1v1h-1zM755 577h1v1h-1zM755 582h1v1h-1zM755 586h1v1h-1zM755 591h1v1h-1zM755 596h1v1h-1zM755 600h1v1h-1zM755 605h1v1h-1zM755 610h1v1h-1zM755 614h1v1h-1zM755 619h1v1h-1zM755 623h1v1h-1zM755 628h1v1h-1zM755 633h1v1h-1zM755 637h1v1h-1zM755 642h1v1h-1zM755 647h1v1h-1zM755 651h1v1h-1zM755 656h1v1h-1zM755 661h1v1h-1zM755 665h1v1h-1zM755 670h1v1h-1zM755 675h1v1h-1zM755 679h1v1h-1zM755 684h1v1h-1zM755 689h1v1h-1zM755 693h1v1h-1zM755 698h1v1h-1zM755 702h1v1h-1zM755 707h1v1h-1zM755 712h1v1h-1zM755 716h1v1h-1zM755 721h1v1h-1zM755 726h1v1h-1zM755 730h1v1h-1zM755 735h1v1h-1zM755 740h1v1h-1zM755 744h1v1h-1zM755 749h1v1h-1zM755 754h1v1h-1zM755 758h1v1h-1zM755 763h1v1h-1zM755 768h1v1h-1zM755 772h1v1h-1zM755 777h1v1h-1zM755 782h1v1h-1zM755 786h1v1h-1zM755 791h1v1h-1zM755 796h1v1h-1zM755 800h1v1h-1zM755 805h1v1h-1zM755 809h1v1h-1zM755 814h1v1h-1zM755 819h1v1h-1zM755 823h1v1h-1zM755 828h1v1h-1zM755 833h1v1h-1zM755 837h1v1h-1zM755 842h1v1h-1zM755 847h1v1h-1zM755 851h1v1h-1zM755 856h1v1h-1zM755 861h1v1h-1zM755 865h1v1h-1zM755 870h1v1h-1zM755 875h1v1h-1zM755 879h1v1h-1zM755 884h1v1h-1zM755 888h1v1h-1zM755 893h1v1h-1zM755 898h1v1h-1zM755 902h1v1h-1zM755 907h1v1h-1zM755 912h1v1h-1zM755 916h1v1h-1zM755 921h1v1h-1zM755 926h1v1h-1zM755 930h1v1h-1zM755 935h1v1h-1zM755 940h1v1h-1zM755 944h1v1h-1zM755 949h1v1h-1zM755 953h1v1h-1zM755 958h1v1h-1zM755 963h1v1h-1zM755 967h1v1h-1zM755 972h1v1h-1zM790 58h1v1h-1zM790 81h1v1h-1zM790 104h1v1h-1zM790 128h1v1h-1zM790 151h1v1h-1zM790 174h1v1h-1zM790 197h1v1h-1zM790 221h1v1h-1zM790 244h1v1h-1zM790 267h1v1h-1zM790 290h1v1h-1zM790 292h1v1h-1zM790 315h1v1h-1zM790 338h1v1h-1zM790 362h1v1h-1zM790 385h1v1h-1zM790 408h1v1h-1zM790 431h1v1h-1zM790 455h1v1h-1zM790 478h1v1h-1zM790 501h1v1h-1zM790 524h1v1h-1zM790 526h1v1h-1zM790 549h1v1h-1zM790 572h1v1h-1zM790 596h1v1h-1zM790 619h1v1h-1zM790 642h1v1h-1zM790 665h1v1h-1zM790 689h1v1h-1zM790 712h1v1h-1zM790 735h1v1h-1zM790 758h1v1h-1zM790 763h1v1h-1zM790 786h1v1h-1zM790 809h1v1h-1zM790 833h1v1h-1zM790 856h1v1h-1zM790 879h1v1h-1zM790 902h1v1h-1zM790 926h1v1h-1zM790 949h1v1h-1zM790 972h1v1h-1zM825 58h1v1h-1zM825 81h1v1h-1zM825 104h1v1h-1zM825 128h1v1h-1zM825 151h1v1h-1zM825 174h1v1h-1zM825 197h1v1h-1zM825 221h1v1h-1zM825 244h1v1h-1zM825 267h1v1h-1zM825 290h1v1h-1zM825 292h1v1h-1zM825 315h1v1h-1zM825 338h1v1h-1zM825 362h1v1h-1zM825 385h1v1h-1zM825 408h1v1h-1zM825 431h1v1h-1zM825 455h1v1h-1zM825 478h1v1h-1zM825 501h1v1h-1zM825 524h1v1h-1zM825 526h1v1h-1zM825 549h1v1h-1zM825 572h1v1h-1zM825 596h1v1h-1zM825 619h1v1h-1zM825 642h1v1h-1zM825 665h1v1h-1zM825 689h1v1h-1zM825 712h1v1h-1zM825 735h1v1h-1zM825 758h1v1h-1zM825 763h1v1h-1zM825 786h1v1h-1zM825 809h1v1h-1zM825 833h1v1h-1zM825 856h1v1h-1zM825 879h1v1h-1zM825 902h1v1h-1zM825 926h1v1h-1zM825 949h1v1h-1zM825 972h1v1h-1zM859 58h1v1h-1zM859 81h1v1h-1zM859 104h1v1h-1zM859 128h1v1h-1zM859 151h1v1h-1zM859 174h1v1h-1zM859 197h1v1h-1zM859 221h1v1h-1zM859 244h1v1h-1zM859 267h1v1h-1zM859 290h1v1h-1zM859 292h1v1h-1zM859 315h1v1h-1zM859 338h1v1h-1zM859 362h1v1h-1zM859 385h1v1h-1zM859 408h1v1h-1zM859 431h1v1h-1zM859 455h1v1h-1zM859 478h1v1h-1zM859 501h1v1h-1zM859 524h1v1h-1zM859 526h1v1h-1zM859 549h1v1h-1zM859 572h1v1h-1zM859 596h1v1h-1zM859 619h1v1h-1zM859 642h1v1h-1zM859 665h1v1h-1zM859 689h1v1h-1zM859 712h1v1h-1zM859 735h1v1h-1zM859 758h1v1h-1zM859 763h1v1h-1zM859 786h1v1h-1zM859 809h1v1h-1zM859 833h1v1h-1zM859 856h1v1h-1zM859 879h1v1h-1zM859 902h1v1h-1zM859 926h1v1h-1zM859 949h1v1h-1zM859 972h1v1h-1zM894 58h1v1h-1zM894 81h1v1h-1zM894 104h1v1h-1zM894 128h1v1h-1zM894 151h1v1h-1zM894 174h1v1h-1zM894 197h1v1h-1zM894 221h1v1h-1zM894 244h1v1h-1zM894 267h1v1h-1zM894 290h1v1h-1zM894 292h1v1h-1zM894 315h1v1h-1zM894 338h1v1h-1zM894 362h1v1h-1zM894 385h1v1h-1zM894 408h1v1h-1zM894 431h1v1h-1zM894 455h1v1h-1zM894 478h1v1h-1zM894 501h1v1h-1zM894 524h1v1h-1zM894 526h1v1h-1zM894 549h1v1h-1zM894 572h1v1h-1zM894 596h1v1h-1zM894 619h1v1h-1zM894 642h1v1h-1zM894 665h1v1h-1zM894 689h1v1h-1zM894 712h1v1h-1zM894 735h1v1h-1zM894 758h1v1h-1zM894 763h1v1h-1zM894 786h1v1h-1zM894 809h1v1h-1zM894 833h1v1h-1zM894 856h1v1h-1zM894 879h1v1h-1zM894 902h1v1h-1zM894 926h1v1h-1zM894 949h1v1h-1zM894 972h1v1h-1zM929 58h1v1h-1zM929 63h1v1h-1zM929 67h1v1h-1zM929 72h1v1h-1zM929 76h1v1h-1zM929 81h1v1h-1zM929 86h1v1h-1zM929 90h1v1h-1zM929 95h1v1h-1zM929 100h1v1h-1zM929 104h1v1h-1zM929 109h1v1h-1zM929 114h1v1h-1zM929 118h1v1h-1zM929 123h1v1h-1zM929 128h1v1h-1zM929 132h1v1h-1zM929 137h1v1h-1zM929 142h1v1h-1zM929 146h1v1h-1zM929 151h1v1h-1zM929 155h1v1h-1zM929 160h1v1h-1zM929 165h1v1h-1zM929 169h1v1h-1zM929 174h1v1h-1zM929 179h1v1h-1zM929 183h1v1h-1zM929 188h1v1h-1zM929 193h1v1h-1zM929 197h1v1h-1zM929 202h1v1h-1zM929 207h1v1h-1zM929 211h1v1h-1zM929 216h1v1h-1zM929 221h1v1h-1zM929 225h1v1h-1zM929 230h1v1h-1zM929 234h1v1h-1zM929 239h1v1h-1zM929 244h1v1h-1zM929 248h1v1h-1zM929 253h1v1h-1zM929 258h1v1h-1zM929 262h1v1h-1zM929 267h1v1h-1zM929 272h1v1h-1zM929 276h1v1h-1zM929 281h1v1h-1zM929 286h1v1h-1zM929 290h1v1h-1zM929 292h1v1h-1zM929 297h1v1h-1zM929 301h1v1h-1zM929 306h1v1h-1zM929 310h1v1h-1zM929 315h1v1h-1zM929 320h1v1h-1zM929 324h1v1h-1zM929 329h1v1h-1zM929 334h1v1h-1zM929 338h1v1h-1zM929 343h1v1h-1zM929 348h1v1h-1zM929 352h1v1h-1zM929 357h1v1h-1zM929 362h1v1h-1zM929 366h1v1h-1zM929 371h1v1h-1zM929 376h1v1h-1zM929 380h1v1h-1zM929 385h1v1h-1zM929 389h1v1h-1zM929 394h1v1h-1zM929 399h1v1h-1zM929 403h1v1h-1zM929 408h1v1h-1zM929 413h1v1h-1zM929 417h1v1h-1zM929 422h1v1h-1zM929 427h1v1h-1zM929 431h1v1h-1zM929 436h1v1h-1zM929 441h1v1h-1zM929 445h1v1h-1zM929 450h1v1h-1zM929 455h1v1h-1zM929 459h1v1h-1zM929 464h1v1h-1zM929 468h1v1h-1zM929 473h1v1h-1zM929 478h1v1h-1zM929 482h1v1h-1zM929 487h1v1h-1zM929 492h1v1h-1zM929 496h1v1h-1zM929 501h1v1h-1zM929 506h1v1h-1zM929 510h1v1h-1zM929 515h1v1h-1zM929 520h1v1h-1zM929 524h1v1h-1zM929 526h1v1h-1zM929 531h1v1h-1zM929 535h1v1h-1zM929 540h1v1h-1zM929 544h1v1h-1zM929 549h1v1h-1zM929 554h1v1h-1zM929 558h1v1h-1zM929 563h1v1h-1zM929 568h1v1h-1zM929 572h1v1h-1zM929 577h1v1h-1zM929 582h1v1h-1zM929 586h1v1h-1zM929 591h1v1h-1zM929 596h1v1h-1zM929 600h1v1h-1zM929 605h1v1h-1zM929 610h1v1h-1zM929 614h1v1h-1zM929 619h1v1h-1zM929 623h1v1h-1zM929 628h1v1h-1zM929 633h1v1h-1zM929 637h1v1h-1zM929 642h1v1h-1zM929 647h1v1h-1zM929 651h1v1h-1zM929 656h1v1h-1zM929 661h1v1h-1zM929 665h1v1h-1zM929 670h1v1h-1zM929 675h1v1h-1zM929 679h1v1h-1zM929 684h1v1h-1zM929 689h1v1h-1zM929 693h1v1h-1zM929 698h1v1h-1zM929 702h1v1h-1zM929 707h1v1h-1zM929 712h1v1h-1zM929 716h1v1h-1zM929 721h1v1h-1zM929 726h1v1h-1zM929 730h1v1h-1zM929 735h1v1h-1zM929 740h1v1h-1zM929 744h1v1h-1zM929 749h1v1h-1zM929 754h1v1h-1zM929 758h1v1h-1zM929 763h1v1h-1zM929 768h1v1h-1zM929 772h1v1h-1zM929 777h1v1h-1zM929 782h1v1h-1zM929 786h1v1h-1zM929 791h1v1h-1zM929 796h1v1h-1zM929 800h1v1h-1zM929 805h1v1h-1zM929 809h1v1h-1zM929 814h1v1h-1zM929 819h1v1h-1zM929 823h1v1h-1zM929 828h1v1h-1zM929 833h1v1h-1zM929 837h1v1h-1zM929 842h1v1h-1zM929 847h1v1h-1zM929 851h1v1h-1zM929 856h1v1h-1zM929 861h1v1h-1zM929 865h1v1h-1zM929 870h1v1h-1zM929 875h1v1h-1zM929 879h1v1h-1zM929 884h1v1h-1zM929 888h1v1h-1zM929 893h1v1h-1zM929 898h1v1h-1zM929 902h1v1h-1zM929 907h1v1h-1zM929 912h1v1h-1zM929 916h1v1h-1zM929 921h1v1h-1zM929 926h1v1h-1zM929 930h1v1h-1zM929 935h1v1h-1zM929 940h1v1h-1zM929 944h1v1h-1zM929 949h1v1h-1zM929 953h1v1h-1zM929 958h1v1h-1zM929 963h1v1h-1zM929 967h1v1h-1zM929 972h1v1h-1zM964 58h1v1h-1zM964 81h1v1h-1zM964 104h1v1h-1zM964 128h1v1h-1zM964 151h1v1h-1zM964 174h1v1h-1zM964 197h1v1h-1zM964 221h1v1h-1zM964 244h1v1h-1zM964 267h1v1h-1zM964 290h1v1h-1zM964 292h1v1h-1zM964 315h1v1h-1zM964 338h1v1h-1zM964 362h1v1h-1zM964 385h1v1h-1zM964 408h1v1h-1zM964 431h1v1h-1zM964 455h1v1h-1zM964 478h1v1h-1zM964 501h1v1h-1zM964 524h1v1h-1zM964 526h1v1h-1zM964 549h1v1h-1zM964 572h1v1h-1zM964 596h1v1h-1zM964 619h1v1h-1zM964 642h1v1h-1zM964 665h1v1h-1zM964 689h1v1h-1zM964 712h1v1h-1zM964 735h1v1h-1zM964 758h1v1h-1zM964 763h1v1h-1zM964 786h1v1h-1zM964 809h1v1h-1zM964 833h1v1h-1zM964 856h1v1h-1zM964 879h1v1h-1zM964 902h1v1h-1zM964 926h1v1h-1zM964 949h1v1h-1zM964 972h1v1h-1zM999 58h1v1h-1zM999 81h1v1h-1zM999 104h1v1h-1zM999 128h1v1h-1zM999 151h1v1h-1zM999 174h1v1h-1zM999 197h1v1h-1zM999 221h1v1h-1zM999 244h1v1h-1zM999 267h1v1h-1zM999 290h1v1h-1zM999 292h1v1h-1zM999 315h1v1h-1zM999 338h1v1h-1zM999 362h1v1h-1zM999 385h1v1h-1zM999 408h1v1h-1zM999 431h1v1h-1zM999 455h1v1h-1zM999 478h1v1h-1zM999 501h1v1h-1zM999 524h1v1h-1zM999 526h1v1h-1zM999 549h1v1h-1zM999 572h1v1h-1zM999 596h1v1h-1zM999 619h1v1h-1zM999 642h1v1h-1zM999 665h1v1h-1zM999 689h1v1h-1zM999 712h1v1h-1zM999 735h1v1h-1zM999 758h1v1h-1zM999 763h1v1h-1zM999 786h1v1h-1zM999 809h1v1h-1zM999 833h1v1h-1zM999 856h1v1h-1zM999 879h1v1h-1zM999 902h1v1h-1zM999 926h1v1h-1zM999 949h1v1h-1zM999 972h1v1h-1zM1034 58h1v1h-1zM1034 81h1v1h-1zM1034 104h1v1h-1zM1034 128h1v1h-1zM1034 151h1v1h-1zM1034 174h1v1h-1zM1034 197h1v1h-1zM1034 221h1v1h-1zM1034 244h1v1h-1zM1034 267h1v1h-1zM1034 290h1v1h-1zM1034 292h1v1h-1zM1034 315h1v1h-1zM1034 338h1v1h-1zM1034 362h1v1h-1zM1034 385h1v1h-1zM1034 408h1v1h-1zM1034 431h1v1h-1zM1034 455h1v1h-1zM1034 478h1v1h-1zM1034 501h1v1h-1zM1034 524h1v1h-1zM1034 526h1v1h-1zM1034 549h1v1h-1zM1034 572h1v1h-1zM1034 596h1v1h-1zM1034 619h1v1h-1zM1034 642h1v1h-1zM1034 665h1v1h-1zM1034 689h1v1h-1zM1034 712h1v1h-1zM1034 735h1v1h-1zM1034 758h1v1h-1zM1034 763h1v1h-1zM1034 786h1v1h-1zM1034 809h1v1h-1zM1034 833h1v1h-1zM1034 856h1v1h-1zM1034 879h1v1h-1zM1034 902h1v1h-1zM1034 926h1v1h-1zM1034 949h1v1h-1zM1034 972h1v1h-1zM1069 58h1v1h-1zM1069 81h1v1h-1zM1069 104h1v1h-1zM1069 128h1v1h-1zM1069 151h1v1h-1zM1069 174h1v1h-1zM1069 197h1v1h-1zM1069 221h1v1h-1zM1069 244h1v1h-1zM1069 267h1v1h-1zM1069 290h1v1h-1zM1069 292h1v1h-1zM1069 315h1v1h-1zM1069 338h1v1h-1zM1069 362h1v1h-1zM1069 385h1v1h-1zM1069 408h1v1h-1zM1069 431h1v1h-1zM1069 455h1v1h-1zM1069 478h1v1h-1zM1069 501h1v1h-1zM1069 524h1v1h-1zM1069 526h1v1h-1zM1069 549h1v1h-1zM1069 572h1v1h-1zM1069 596h1v1h-1zM1069 619h1v1h-1zM1069 642h1v1h-1zM1069 665h1v1h-1zM1069 689h1v1h-1zM1069 712h1v1h-1zM1069 735h1v1h-1zM1069 758h1v1h-1zM1069 763h1v1h-1zM1069 786h1v1h-1zM1069 809h1v1h-1zM1069 833h1v1h-1zM1069 856h1v1h-1zM1069 879h1v1h-1zM1069 902h1v1h-1zM1069 926h1v1h-1zM1069 949h1v1h-1zM1069 972h1v1h-1zM1104 58h1v1h-1zM1104 63h1v1h-1zM1104 67h1v1h-1zM1104 72h1v1h-1zM1104 76h1v1h-1zM1104 81h1v1h-1zM1104 86h1v1h-1zM1104 90h1v1h-1zM1104 95h1v1h-1zM1104 100h1v1h-1zM1104 104h1v1h-1zM1104 109h1v1h-1zM1104 114h1v1h-1zM1104 118h1v1h-1zM1104 123h1v1h-1zM1104 128h1v1h-1zM1104 132h1v1h-1zM1104 137h1v1h-1zM1104 142h1v1h-1zM1104 146h1v1h-1zM1104 151h1v1h-1zM1104 155h1v1h-1zM1104 160h1v1h-1zM1104 165h1v1h-1zM1104 169h1v1h-1zM1104 174h1v1h-1zM1104 179h1v1h-1zM1104 183h1v1h-1zM1104 188h1v1h-1zM1104 193h1v1h-1zM1104 197h1v1h-1zM1104 202h1v1h-1zM1104 207h1v1h-1zM1104 211h1v1h-1zM1104 216h1v1h-1zM1104 221h1v1h-1zM1104 225h1v1h-1zM1104 230h1v1h-1zM1104 234h1v1h-1zM1104 239h1v1h-1zM1104 244h1v1h-1zM1104 248h1v1h-1zM1104 253h1v1h-1zM1104 258h1v1h-1zM1104 262h1v1h-1zM1104 267h1v1h-1zM1104 272h1v1h-1zM1104 276h1v1h-1zM1104 281h1v1h-1zM1104 286h1v1h-1zM1104 290h1v1h-1zM1104 292h1v1h-1zM1104 297h1v1h-1zM1104 301h1v1h-1zM1104 306h1v1h-1zM1104 310h1v1h-1zM1104 315h1v1h-1zM1104 320h1v1h-1zM1104 324h1v1h-1zM1104 329h1v1h-1zM1104 334h1v1h-1zM1104 338h1v1h-1zM1104 343h1v1h-1zM1104 348h1v1h-1zM1104 352h1v1h-1zM1104 357h1v1h-1zM1104 362h1v1h-1zM1104 366h1v1h-1zM1104 371h1v1h-1zM1104 376h1v1h-1zM1104 380h1v1h-1zM1104 385h1v1h-1zM1104 389h1v1h-1zM1104 394h1v1h-1zM1104 399h1v1h-1zM1104 403h1v1h-1zM1104 408h1v1h-1zM1104 413h1v1h-1zM1104 417h1v1h-1zM1104 422h1v1h-1zM1104 427h1v1h-1zM1104 431h1v1h-1zM1104 436h1v1h-1zM1104 441h1v1h-1zM1104 445h1v1h-1zM1104 450h1v1h-1zM1104 455h1v1h-1zM1104 459h1v1h-1zM1104 464h1v1h-1zM1104 468h1v1h-1zM1104 473h1v1h-1zM1104 478h1v1h-1zM1104 482h1v1h-1zM1104 487h1v1h-1zM1104 492h1v1h-1zM1104 496h1v1h-1zM1104 501h1v1h-1zM1104 506h1v1h-1zM1104 510h1v1h-1zM1104 515h1v1h-1zM1104 520h1v1h-1zM1104 524h1v1h-1zM1104 526h1v1h-1zM1104 531h1v1h-1zM1104 535h1v1h-1zM1104 540h1v1h-1zM1104 544h1v1h-1zM1104 549h1v1h-1zM1104 554h1v1h-1zM1104 558h1v1h-1zM1104 563h1v1h-1zM1104 568h1v1h-1zM1104 572h1v1h-1zM1104 577h1v1h-1zM1104 582h1v1h-1zM1104 586h1v1h-1zM1104 591h1v1h-1zM1104 596h1v1h-1zM1104 600h1v1h-1zM1104 605h1v1h-1zM1104 610h1v1h-1zM1104 614h1v1h-1zM1104 619h1v1h-1zM1104 623h1v1h-1zM1104 628h1v1h-1zM1104 633h1v1h-1zM1104 637h1v1h-1zM1104 642h1v1h-1zM1104 647h1v1h-1zM1104 651h1v1h-1zM1104 656h1v1h-1zM1104 661h1v1h-1zM1104 665h1v1h-1zM1104 670h1v1h-1zM1104 675h1v1h-1zM1104 679h1v1h-1zM1104 684h1v1h-1zM1104 689h1v1h-1zM1104 693h1v1h-1zM1104 698h1v1h-1zM1104 702h1v1h-1zM1104 707h1v1h-1zM1104 712h1v1h-1zM1104 716h1v1h-1zM1104 721h1v1h-1zM1104 726h1v1h-1zM1104 730h1v1h-1zM1104 735h1v1h-1zM1104 740h1v1h-1zM1104 744h1v1h-1zM1104 749h1v1h-1zM1104 754h1v1h-1zM1104 758h1v1h-1zM1104 763h1v1h-1zM1104 768h1v1h-1zM1104 772h1v1h-1zM1104 777h1v1h-1zM1104 782h1v1h-1zM1104 786h1v1h-1zM1104 791h1v1h-1zM1104 796h1v1h-1zM1104 800h1v1h-1zM1104 805h1v1h-1zM1104 809h1v1h-1zM1104 814h1v1h-1zM1104 819h1v1h-1zM1104 823h1v1h-1zM1104 828h1v1h-1zM1104 833h1v1h-1zM1104 837h1v1h-1zM1104 842h1v1h-1zM1104 847h1v1h-1zM1104 851h1v1h-1zM1104 856h1v1h-1zM1104 861h1v1h-1zM1104 865h1v1h-1zM1104 870h1v1h-1zM1104 875h1v1h-1zM1104 879h1v1h-1zM1104 884h1v1h-1zM1104 888h1v1h-1zM1104 893h1v1h-1zM1104 898h1v1h-1zM1104 902h1v1h-1zM1104 907h1v1h-1zM1104 912h1v1h-1zM1104 916h1v1h-1zM1104 921h1v1h-1zM1104 926h1v1h-1zM1104 930h1v1h-1zM1104 935h1v1h-1zM1104 940h1v1h-1zM1104 944h1v1h-1zM1104 949h1v1h-1zM1104 953h1v1h-1zM1104 958h1v1h-1zM1104 963h1v1h-1zM1104 967h1v1h-1zM1104 972h1v1h-1zM1139 58h1v1h-1zM1139 81h1v1h-1zM1139 104h1v1h-1zM1139 128h1v1h-1zM1139 151h1v1h-1zM1139 174h1v1h-1zM1139 197h1v1h-1zM1139 221h1v1h-1zM1139 244h1v1h-1zM1139 267h1v1h-1zM1139 290h1v1h-1zM1139 292h1v1h-1zM1139 315h1v1h-1zM1139 338h1v1h-1zM1139 362h1v1h-1zM1139 385h1v1h-1zM1139 408h1v1h-1zM1139 431h1v1h-1zM1139 455h1v1h-1zM1139 478h1v1h-1zM1139 501h1v1h-1zM1139 524h1v1h-1zM1139 526h1v1h-1zM1139 549h1v1h-1zM1139 572h1v1h-1zM1139 596h1v1h-1zM1139 619h1v1h-1zM1139 642h1v1h-1zM1139 665h1v1h-1zM1139 689h1v1h-1zM1139 712h1v1h-1zM1139 735h1v1h-1zM1139 758h1v1h-1zM1139 763h1v1h-1zM1139 786h1v1h-1zM1139 809h1v1h-1zM1139 833h1v1h-1zM1139 856h1v1h-1zM1139 879h1v1h-1zM1139 902h1v1h-1zM1139 926h1v1h-1zM1139 949h1v1h-1zM1139 972h1v1h-1zM1174 58h1v1h-1zM1174 81h1v1h-1zM1174 104h1v1h-1zM1174 128h1v1h-1zM1174 151h1v1h-1zM1174 174h1v1h-1zM1174 197h1v1h-1zM1174 221h1v1h-1zM1174 244h1v1h-1zM1174 267h1v1h-1zM1174 290h1v1h-1zM1174 292h1v1h-1zM1174 315h1v1h-1zM1174 338h1v1h-1zM1174 362h1v1h-1zM1174 385h1v1h-1zM1174 408h1v1h-1zM1174 431h1v1h-1zM1174 455h1v1h-1zM1174 478h1v1h-1zM1174 501h1v1h-1zM1174 524h1v1h-1zM1174 526h1v1h-1zM1174 549h1v1h-1zM1174 572h1v1h-1zM1174 596h1v1h-1zM1174 619h1v1h-1zM1174 642h1v1h-1zM1174 665h1v1h-1zM1174 689h1v1h-1zM1174 712h1v1h-1zM1174 735h1v1h-1zM1174 758h1v1h-1zM1174 763h1v1h-1zM1174 786h1v1h-1zM1174 809h1v1h-1zM1174 833h1v1h-1zM1174 856h1v1h-1zM1174 879h1v1h-1zM1174 902h1v1h-1zM1174 926h1v1h-1zM1174 949h1v1h-1zM1174 972h1v1h-1zM1209 58h1v1h-1zM1209 81h1v1h-1zM1209 104h1v1h-1zM1209 128h1v1h-1zM1209 151h1v1h-1zM1209 174h1v1h-1zM1209 197h1v1h-1zM1209 221h1v1h-1zM1209 244h1v1h-1zM1209 267h1v1h-1zM1209 290h1v1h-1zM1209 292h1v1h-1zM1209 315h1v1h-1zM1209 338h1v1h-1zM1209 362h1v1h-1zM1209 385h1v1h-1zM1209 408h1v1h-1zM1209 431h1v1h-1zM1209 455h1v1h-1zM1209 478h1v1h-1zM1209 501h1v1h-1zM1209 524h1v1h-1zM1209 526h1v1h-1zM1209 549h1v1h-1zM1209 572h1v1h-1zM1209 596h1v1h-1zM1209 619h1v1h-1zM1209 642h1v1h-1zM1209 665h1v1h-1zM1209 689h1v1h-1zM1209 712h1v1h-1zM1209 735h1v1h-1zM1209 758h1v1h-1zM1209 763h1v1h-1zM1209 786h1v1h-1zM1209 809h1v1h-1zM1209 833h1v1h-1zM1209 856h1v1h-1zM1209 879h1v1h-1zM1209 902h1v1h-1zM1209 926h1v1h-1zM1209 949h1v1h-1zM1209 972h1v1h-1zM1244 58h1v1h-1zM1244 81h1v1h-1zM1244 104h1v1h-1zM1244 128h1v1h-1zM1244 151h1v1h-1zM1244 174h1v1h-1zM1244 197h1v1h-1zM1244 221h1v1h-1zM1244 244h1v1h-1zM1244 267h1v1h-1zM1244 290h1v1h-1zM1244 292h1v1h-1zM1244 315h1v1h-1zM1244 338h1v1h-1zM1244 362h1v1h-1zM1244 385h1v1h-1zM1244 408h1v1h-1zM1244 431h1v1h-1zM1244 455h1v1h-1zM1244 478h1v1h-1zM1244 501h1v1h-1zM1244 524h1v1h-1zM1244 526h1v1h-1zM1244 549h1v1h-1zM1244 572h1v1h-1zM1244 596h1v1h-1zM1244 619h1v1h-1zM1244 642h1v1h-1zM1244 665h1v1h-1zM1244 689h1v1h-1zM1244 712h1v1h-1zM1244 735h1v1h-1zM1244 758h1v1h-1zM1244 763h1v1h-1zM1244 786h1v1h-1zM1244 809h1v1h-1zM1244 833h1v1h-1zM1244 856h1v1h-1zM1244 879h1v1h-1zM1244 902h1v1h-1zM1244 926h1v1h-1zM1244 949h1v1h-1zM1244 972h1v1h-1zM1279 58h1v1h-1zM1279 63h1v1h-1zM1279 67h1v1h-1zM1279 72h1v1h-1zM1279 76h1v1h-1zM1279 81h1v1h-1zM1279 86h1v1h-1zM1279 90h1v1h-1zM1279 95h1v1h-1zM1279 100h1v1h-1zM1279 104h1v1h-1zM1279 109h1v1h-1zM1279 114h1v1h-1zM1279 118h1v1h-1zM1279 123h1v1h-1zM1279 128h1v1h-1zM1279 132h1v1h-1zM1279 137h1v1h-1zM1279 142h1v1h-1zM1279 146h1v1h-1zM1279 151h1v1h-1zM1279 155h1v1h-1zM1279 160h1v1h-1zM1279 165h1v1h-1zM1279 169h1v1h-1zM1279 174h1v1h-1zM1279 179h1v1h-1zM1279 183h1v1h-1zM1279 188h1v1h-1zM1279 193h1v1h-1zM1279 197h1v1h-1zM1279 202h1v1h-1zM1279 207h1v1h-1zM1279 211h1v1h-1zM1279 216h1v1h-1zM1279 221h1v1h-1zM1279 225h1v1h-1zM1279 230h1v1h-1zM1279 234h1v1h-1zM1279 239h1v1h-1zM1279 244h1v1h-1zM1279 248h1v1h-1zM1279 253h1v1h-1zM1279 258h1v1h-1zM1279 262h1v1h-1zM1279 267h1v1h-1zM1279 272h1v1h-1zM1279 276h1v1h-1zM1279 281h1v1h-1zM1279 286h1v1h-1zM1279 290h1v1h-1zM1279 292h1v1h-1zM1279 297h1v1h-1zM1279 301h1v1h-1zM1279 306h1v1h-1zM1279 310h1v1h-1zM1279 315h1v1h-1zM1279 320h1v1h-1zM1279 324h1v1h-1zM1279 329h1v1h-1zM1279 334h1v1h-1zM1279 338h1v1h-1zM1279 343h1v1h-1zM1279 348h1v1h-1zM1279 352h1v1h-1zM1279 357h1v1h-1zM1279 362h1v1h-1zM1279 366h1v1h-1zM1279 371h1v1h-1zM1279 376h1v1h-1zM1279 380h1v1h-1zM1279 385h1v1h-1zM1279 389h1v1h-1zM1279 394h1v1h-1zM1279 399h1v1h-1zM1279 403h1v1h-1zM1279 408h1v1h-1zM1279 413h1v1h-1zM1279 417h1v1h-1zM1279 422h1v1h-1zM1279 427h1v1h-1zM1279 431h1v1h-1zM1279 436h1v1h-1zM1279 441h1v1h-1zM1279 445h1v1h-1zM1279 450h1v1h-1zM1279 455h1v1h-1zM1279 459h1v1h-1zM1279 464h1v1h-1zM1279 468h1v1h-1zM1279 473h1v1h-1zM1279 478h1v1h-1zM1279 482h1v1h-1zM1279 487h1v1h-1zM1279 492h1v1h-1zM1279 496h1v1h-1zM1279 501h1v1h-1zM1279 506h1v1h-1zM1279 510h1v1h-1zM1279 515h1v1h-1zM1279 520h1v1h-1zM1279 524h1v1h-1zM1279 526h1v1h-1zM1279 531h1v1h-1zM1279 535h1v1h-1zM1279 540h1v1h-1zM1279 544h1v1h-1zM1279 549h1v1h-1zM1279 554h1v1h-1zM1279 558h1v1h-1zM1279 563h1v1h-1zM1279 568h1v1h-1zM1279 572h1v1h-1zM1279 577h1v1h-1zM1279 582h1v1h-1zM1279 586h1v1h-1zM1279 591h1v1h-1zM1279 596h1v1h-1zM1279 600h1v1h-1zM1279 605h1v1h-1zM1279 610h1v1h-1zM1279 614h1v1h-1zM1279 619h1v1h-1zM1279 623h1v1h-1zM1279 628h1v1h-1zM1279 633h1v1h-1zM1279 637h1v1h-1zM1279 642h1v1h-1zM1279 647h1v1h-1zM1279 651h1v1h-1zM1279 656h1v1h-1zM1279 661h1v1h-1zM1279 665h1v1h-1zM1279 670h1v1h-1zM1279 675h1v1h-1zM1279 679h1v1h-1zM1279 684h1v1h-1zM1279 689h1v1h-1zM1279 693h1v1h-1zM1279 698h1v1h-1zM1279 702h1v1h-1zM1279 707h1v1h-1zM1279 712h1v1h-1zM1279 716h1v1h-1zM1279 721h1v1h-1zM1279 726h1v1h-1zM1279 730h1v1h-1zM1279 735h1v1h-1zM1279 740h1v1h-1zM1279 744h1v1h-1zM1279 749h1v1h-1zM1279 754h1v1h-1zM1279 758h1v1h-1zM1279 763h1v1h-1zM1279 768h1v1h-1zM1279 772h1v1h-1zM1279 777h1v1h-1zM1279 782h1v1h-1zM1279 786h1v1h-1zM1279 791h1v1h-1zM1279 796h1v1h-1zM1279 800h1v1h-1zM1279 805h1v1h-1zM1279 809h1v1h-1zM1279 814h1v1h-1zM1279 819h1v1h-1zM1279 823h1v1h-1zM1279 828h1v1h-1zM1279 833h1v1h-1zM1279 837h1v1h-1zM1279 842h1v1h-1zM1279 847h1v1h-1zM1279 851h1v1h-1zM1279 856h1v1h-1zM1279 861h1v1h-1zM1279 865h1v1h-1zM1279 870h1v1h-1zM1279 875h1v1h-1zM1279 879h1v1h-1zM1279 884h1v1h-1zM1279 888h1v1h-1zM1279 893h1v1h-1zM1279 898h1v1h-1zM1279 902h1v1h-1zM1279 907h1v1h-1zM1279 912h1v1h-1zM1279 916h1v1h-1zM1279 921h1v1h-1zM1279 926h1v1h-1zM1279 930h1v1h-1zM1279 935h1v1h-1zM1279 940h1v1h-1zM1279 944h1v1h-1zM1279 949h1v1h-1zM1279 953h1v1h-1zM1279 958h1v1h-1zM1279 963h1v1h-1zM1279 967h1v1h-1zM1279 972h1v1h-1zM1314 58h1v1h-1zM1314 81h1v1h-1zM1314 104h1v1h-1zM1314 128h1v1h-1zM1314 151h1v1h-1zM1314 174h1v1h-1zM1314 197h1v1h-1zM1314 221h1v1h-1zM1314 244h1v1h-1zM1314 267h1v1h-1zM1314 290h1v1h-1zM1314 292h1v1h-1zM1314 315h1v1h-1zM1314 338h1v1h-1zM1314 362h1v1h-1zM1314 385h1v1h-1zM1314 408h1v1h-1zM1314 431h1v1h-1zM1314 455h1v1h-1zM1314 478h1v1h-1zM1314 501h1v1h-1zM1314 524h1v1h-1zM1314 526h1v1h-1zM1314 549h1v1h-1zM1314 572h1v1h-1zM1314 596h1v1h-1zM1314 619h1v1h-1zM1314 642h1v1h-1zM1314 665h1v1h-1zM1314 689h1v1h-1zM1314 712h1v1h-1zM1314 735h1v1h-1zM1314 758h1v1h-1zM1314 763h1v1h-1zM1314 786h1v1h-1zM1314 809h1v1h-1zM1314 833h1v1h-1zM1314 856h1v1h-1zM1314 879h1v1h-1zM1314 902h1v1h-1zM1314 926h1v1h-1zM1314 949h1v1h-1zM1314 972h1v1h-1zM1349 58h1v1h-1zM1349 81h1v1h-1zM1349 104h1v1h-1zM1349 128h1v1h-1zM1349 151h1v1h-1zM1349 174h1v1h-1zM1349 197h1v1h-1zM1349 221h1v1h-1zM1349 244h1v1h-1zM1349 267h1v1h-1zM1349 290h1v1h-1zM1349 292h1v1h-1zM1349 315h1v1h-1zM1349 338h1v1h-1zM1349 362h1v1h-1zM1349 385h1v1h-1zM1349 408h1v1h-1zM1349 431h1v1h-1zM1349 455h1v1h-1zM1349 478h1v1h-1zM1349 501h1v1h-1zM1349 524h1v1h-1zM1349 526h1v1h-1zM1349 549h1v1h-1zM1349 572h1v1h-1zM1349 596h1v1h-1zM1349 619h1v1h-1zM1349 642h1v1h-1zM1349 665h1v1h-1zM1349 689h1v1h-1zM1349 712h1v1h-1zM1349 735h1v1h-1zM1349 758h1v1h-1zM1349 763h1v1h-1zM1349 786h1v1h-1zM1349 809h1v1h-1zM1349 833h1v1h-1zM1349 856h1v1h-1zM1349 879h1v1h-1zM1349 902h1v1h-1zM1349 926h1v1h-1zM1349 949h1v1h-1zM1349 972h1v1h-1zM1384 58h1v1h-1zM1384 81h1v1h-1zM1384 104h1v1h-1zM1384 128h1v1h-1zM1384 151h1v1h-1zM1384 174h1v1h-1zM1384 197h1v1h-1zM1384 221h1v1h-1zM1384 244h1v1h-1zM1384 267h1v1h-1zM1384 290h1v1h-1zM1384 292h1v1h-1zM1384 315h1v1h-1zM1384 338h1v1h-1zM1384 362h1v1h-1zM1384 385h1v1h-1zM1384 408h1v1h-1zM1384 431h1v1h-1zM1384 455h1v1h-1zM1384 478h1v1h-1zM1384 501h1v1h-1zM1384 524h1v1h-1zM1384 526h1v1h-1zM1384 549h1v1h-1zM1384 572h1v1h-1zM1384 596h1v1h-1zM1384 619h1v1h-1zM1384 642h1v1h-1zM1384 665h1v1h-1zM1384 689h1v1h-1zM1384 712h1v1h-1zM1384 735h1v1h-1zM1384 758h1v1h-1zM1384 763h1v1h-1zM1384 786h1v1h-1zM1384 809h1v1h-1zM1384 833h1v1h-1zM1384 856h1v1h-1zM1384 879h1v1h-1zM1384 902h1v1h-1zM1384 926h1v1h-1zM1384 949h1v1h-1zM1384 972h1v1h-1zM1419 58h1v1h-1zM1419 81h1v1h-1zM1419 104h1v1h-1zM1419 128h1v1h-1zM1419 151h1v1h-1zM1419 174h1v1h-1zM1419 197h1v1h-1zM1419 221h1v1h-1zM1419 244h1v1h-1zM1419 267h1v1h-1zM1419 290h1v1h-1zM1419 292h1v1h-1zM1419 315h1v1h-1zM1419 338h1v1h-1zM1419 362h1v1h-1zM1419 385h1v1h-1zM1419 408h1v1h-1zM1419 431h1v1h-1zM1419 455h1v1h-1zM1419 478h1v1h-1zM1419 501h1v1h-1zM1419 524h1v1h-1zM1419 526h1v1h-1zM1419 549h1v1h-1zM1419 572h1v1h-1zM1419 596h1v1h-1zM1419 619h1v1h-1zM1419 642h1v1h-1zM1419 665h1v1h-1zM1419 689h1v1h-1zM1419 712h1v1h-1zM1419 735h1v1h-1zM1419 758h1v1h-1zM1419 763h1v1h-1zM1419 786h1v1h-1zM1419 809h1v1h-1zM1419 833h1v1h-1zM1419 856h1v1h-1zM1419 879h1v1h-1zM1419 902h1v1h-1zM1419 926h1v1h-1zM1419 949h1v1h-1zM1419 972h1v1h-1zM1454 58h1v1h-1zM1454 63h1v1h-1zM1454 67h1v1h-1zM1454 72h1v1h-1zM1454 76h1v1h-1zM1454 81h1v1h-1zM1454 86h1v1h-1zM1454 90h1v1h-1zM1454 95h1v1h-1zM1454 100h1v1h-1zM1454 104h1v1h-1zM1454 109h1v1h-1zM1454 114h1v1h-1zM1454 118h1v1h-1zM1454 123h1v1h-1zM1454 128h1v1h-1zM1454 132h1v1h-1zM1454 137h1v1h-1zM1454 142h1v1h-1zM1454 146h1v1h-1zM1454 151h1v1h-1zM1454 155h1v1h-1zM1454 160h1v1h-1zM1454 165h1v1h-1zM1454 169h1v1h-1zM1454 174h1v1h-1zM1454 179h1v1h-1zM1454 183h1v1h-1zM1454 188h1v1h-1zM1454 193h1v1h-1zM1454 197h1v1h-1zM1454 202h1v1h-1zM1454 207h1v1h-1zM1454 211h1v1h-1zM1454 216h1v1h-1zM1454 221h1v1h-1zM1454 225h1v1h-1zM1454 230h1v1h-1zM1454 234h1v1h-1zM1454 239h1v1h-1zM1454 244h1v1h-1zM1454 248h1v1h-1zM1454 253h1v1h-1zM1454 258h1v1h-1zM1454 262h1v1h-1zM1454 267h1v1h-1zM1454 272h1v1h-1zM1454 276h1v1h-1zM1454 281h1v1h-1zM1454 286h1v1h-1zM1454 290h1v1h-1zM1454 292h1v1h-1zM1454 297h1v1h-1zM1454 301h1v1h-1zM1454 306h1v1h-1zM1454 310h1v1h-1zM1454 315h1v1h-1zM1454 320h1v1h-1zM1454 324h1v1h-1zM1454 329h1v1h-1zM1454 334h1v1h-1zM1454 338h1v1h-1zM1454 343h1v1h-1zM1454 348h1v1h-1zM1454 352h1v1h-1zM1454 357h1v1h-1zM1454 362h1v1h-1zM1454 366h1v1h-1zM1454 371h1v1h-1zM1454 376h1v1h-1zM1454 380h1v1h-1zM1454 385h1v1h-1zM1454 389h1v1h-1zM1454 394h1v1h-1zM1454 399h1v1h-1zM1454 403h1v1h-1zM1454 408h1v1h-1zM1454 413h1v1h-1zM1454 417h1v1h-1zM1454 422h1v1h-1zM1454 427h1v1h-1zM1454 431h1v1h-1zM1454 436h1v1h-1zM1454 441h1v1h-1zM1454 445h1v1h-1zM1454 450h1v1h-1zM1454 455h1v1h-1zM1454 459h1v1h-1zM1454 464h1v1h-1zM1454 468h1v1h-1zM1454 473h1v1h-1zM1454 478h1v1h-1zM1454 482h1v1h-1zM1454 487h1v1h-1zM1454 492h1v1h-1zM1454 496h1v1h-1zM1454 501h1v1h-1zM1454 506h1v1h-1zM1454 510h1v1h-1zM1454 515h1v1h-1zM1454 520h1v1h-1zM1454 524h1v1h-1zM1454 526h1v1h-1zM1454 531h1v1h-1zM1454 535h1v1h-1zM1454 540h1v1h-1zM1454 544h1v1h-1zM1454 549h1v1h-1zM1454 554h1v1h-1zM1454 558h1v1h-1zM1454 563h1v1h-1zM1454 568h1v1h-1zM1454 572h1v1h-1zM1454 577h1v1h-1zM1454 582h1v1h-1zM1454 586h1v1h-1zM1454 591h1v1h-1zM1454 596h1v1h-1zM1454 600h1v1h-1zM1454 605h1v1h-1zM1454 610h1v1h-1zM1454 614h1v1h-1zM1454 619h1v1h-1zM1454 623h1v1h-1zM1454 628h1v1h-1zM1454 633h1v1h-1zM1454 637h1v1h-1zM1454 642h1v1h-1zM1454 647h1v1h-1zM1454 651h1v1h-1zM1454 656h1v1h-1zM1454 661h1v1h-1zM1454 665h1v1h-1zM1454 670h1v1h-1zM1454 675h1v1h-1zM1454 679h1v1h-1zM1454 684h1v1h-1zM1454 689h1v1h-1zM1454 693h1v1h-1zM1454 698h1v1h-1zM1454 702h1v1h-1zM1454 707h1v1h-1zM1454 712h1v1h-1zM1454 716h1v1h-1zM1454 721h1v1h-1zM1454 726h1v1h-1zM1454 730h1v1h-1zM1454 735h1v1h-1zM1454 740h1v1h-1zM1454 744h1v1h-1zM1454 749h1v1h-1zM1454 754h1v1h-1zM1454 758h1v1h-1zM1454 763h1v1h-1zM1454 768h1v1h-1zM1454 772h1v1h-1zM1454 777h1v1h-1zM1454 782h1v1h-1zM1454 786h1v1h-1zM1454 791h1v1h-1zM1454 796h1v1h-1zM1454 800h1v1h-1zM1454 805h1v1h-1zM1454 809h1v1h-1zM1454 814h1v1h-1zM1454 819h1v1h-1zM1454 823h1v1h-1zM1454 828h1v1h-1zM1454 833h1v1h-1zM1454 837h1v1h-1zM1454 842h1v1h-1zM1454 847h1v1h-1zM1454 851h1v1h-1zM1454 856h1v1h-1zM1454 861h1v1h-1zM1454 865h1v1h-1zM1454 870h1v1h-1zM1454 875h1v1h-1zM1454 879h1v1h-1zM1454 884h1v1h-1zM1454 888h1v1h-1zM1454 893h1v1h-1zM1454 898h1v1h-1zM1454 902h1v1h-1zM1454 907h1v1h-1zM1454 912h1v1h-1zM1454 916h1v1h-1zM1454 921h1v1h-1zM1454 926h1v1h-1zM1454 930h1v1h-1zM1454 935h1v1h-1zM1454 940h1v1h-1zM1454 944h1v1h-1zM1454 949h1v1h-1zM1454 953h1v1h-1zM1454 958h1v1h-1zM1454 963h1v1h-1zM1454 967h1v1h-1zM1454 972h1v1h-1zM1489 58h1v1h-1zM1489 81h1v1h-1zM1489 104h1v1h-1zM1489 128h1v1h-1zM1489 151h1v1h-1zM1489 174h1v1h-1zM1489 197h1v1h-1zM1489 221h1v1h-1zM1489 244h1v1h-1zM1489 267h1v1h-1zM1489 290h1v1h-1zM1489 292h1v1h-1zM1489 315h1v1h-1zM1489 338h1v1h-1zM1489 362h1v1h-1zM1489 385h1v1h-1zM1489 408h1v1h-1zM1489 431h1v1h-1zM1489 455h1v1h-1zM1489 478h1v1h-1zM1489 501h1v1h-1zM1489 524h1v1h-1zM1489 526h1v1h-1zM1489 549h1v1h-1zM1489 572h1v1h-1zM1489 596h1v1h-1zM1489 619h1v1h-1zM1489 642h1v1h-1zM1489 665h1v1h-1zM1489 689h1v1h-1zM1489 712h1v1h-1zM1489 735h1v1h-1zM1489 758h1v1h-1zM1489 763h1v1h-1zM1489 786h1v1h-1zM1489 809h1v1h-1zM1489 833h1v1h-1zM1489 856h1v1h-1zM1489 879h1v1h-1zM1489 902h1v1h-1zM1489 926h1v1h-1zM1489 949h1v1h-1zM1489 972h1v1h-1zM1524 58h1v1h-1zM1524 81h1v1h-1zM1524 104h1v1h-1zM1524 128h1v1h-1zM1524 151h1v1h-1zM1524 174h1v1h-1zM1524 197h1v1h-1zM1524 221h1v1h-1zM1524 244h1v1h-1zM1524 267h1v1h-1zM1524 290h1v1h-1zM1524 292h1v1h-1zM1524 315h1v1h-1zM1524 338h1v1h-1zM1524 362h1v1h-1zM1524 385h1v1h-1zM1524 408h1v1h-1zM1524 431h1v1h-1zM1524 455h1v1h-1zM1524 478h1v1h-1zM1524 501h1v1h-1zM1524 524h1v1h-1zM1524 526h1v1h-1zM1524 549h1v1h-1zM1524 572h1v1h-1zM1524 596h1v1h-1zM1524 619h1v1h-1zM1524 642h1v1h-1zM1524 665h1v1h-1zM1524 689h1v1h-1zM1524 712h1v1h-1zM1524 735h1v1h-1zM1524 758h1v1h-1zM1524 763h1v1h-1zM1524 786h1v1h-1zM1524 809h1v1h-1zM1524 833h1v1h-1zM1524 856h1v1h-1zM1524 879h1v1h-1zM1524 902h1v1h-1zM1524 926h1v1h-1zM1524 949h1v1h-1zM1524 972h1v1h-1zM1559 58h1v1h-1zM1559 81h1v1h-1zM1559 104h1v1h-1zM1559 128h1v1h-1zM1559 151h1v1h-1zM1559 174h1v1h-1zM1559 197h1v1h-1zM1559 221h1v1h-1zM1559 244h1v1h-1zM1559 267h1v1h-1zM1559 290h1v1h-1zM1559 292h1v1h-1zM1559 315h1v1h-1zM1559 338h1v1h-1zM1559 362h1v1h-1zM1559 385h1v1h-1zM1559 408h1v1h-1zM1559 431h1v1h-1zM1559 455h1v1h-1zM1559 478h1v1h-1zM1559 501h1v1h-1zM1559 524h1v1h-1zM1559 526h1v1h-1zM1559 549h1v1h-1zM1559 572h1v1h-1zM1559 596h1v1h-1zM1559 619h1v1h-1zM1559 642h1v1h-1zM1559 665h1v1h-1zM1559 689h1v1h-1zM1559 712h1v1h-1zM1559 735h1v1h-1zM1559 758h1v1h-1zM1559 763h1v1h-1zM1559 786h1v1h-1zM1559 809h1v1h-1zM1559 833h1v1h-1zM1559 856h1v1h-1zM1559 879h1v1h-1zM1559 902h1v1h-1zM1559 926h1v1h-1zM1559 949h1v1h-1zM1559 972h1v1h-1zM1594 58h1v1h-1zM1594 81h1v1h-1zM1594 104h1v1h-1zM1594 128h1v1h-1zM1594 151h1v1h-1zM1594 174h1v1h-1zM1594 197h1v1h-1zM1594 221h1v1h-1zM1594 244h1v1h-1zM1594 267h1v1h-1zM1594 290h1v1h-1zM1594 292h1v1h-1zM1594 315h1v1h-1zM1594 338h1v1h-1zM1594 362h1v1h-1zM1594 385h1v1h-1zM1594 408h1v1h-1zM1594 431h1v1h-1zM1594 455h1v1h-1zM1594 478h1v1h-1zM1594 501h1v1h-1zM1594 524h1v1h-1zM1594 526h1v1h-1zM1594 549h1v1h-1zM1594 572h1v1h-1zM1594 596h1v1h-1zM1594 619h1v1h-1zM1594 642h1v1h-1zM1594 665h1v1h-1zM1594 689h1v1h-1zM1594 712h1v1h-1zM1594 735h1v1h-1zM1594 758h1v1h-1zM1594 763h1v1h-1zM1594 786h1v1h-1zM1594 809h1v1h-1zM1594 833h1v1h-1zM1594 856h1v1h-1zM1594 879h1v1h-1zM1594 902h1v1h-1zM1594 926h1v1h-1zM1594 949h1v1h-1zM1594 972h1v1h-1zM1629 58h1v1h-1zM1629 63h1v1h-1zM1629 67h1v1h-1zM1629 72h1v1h-1zM1629 76h1v1h-1zM1629 81h1v1h-1zM1629 86h1v1h-1zM1629 90h1v1h-1zM1629 95h1v1h-1zM1629 100h1v1h-1zM1629 104h1v1h-1zM1629 109h1v1h-1zM1629 114h1v1h-1zM1629 118h1v1h-1zM1629 123h1v1h-1zM1629 128h1v1h-1zM1629 132h1v1h-1zM1629 137h1v1h-1zM1629 142h1v1h-1zM1629 146h1v1h-1zM1629 151h1v1h-1zM1629 155h1v1h-1zM1629 160h1v1h-1zM1629 165h1v1h-1zM1629 169h1v1h-1zM1629 174h1v1h-1zM1629 179h1v1h-1zM1629 183h1v1h-1zM1629 188h1v1h-1zM1629 193h1v1h-1zM1629 197h1v1h-1zM1629 202h1v1h-1zM1629 207h1v1h-1zM1629 211h1v1h-1zM1629 216h1v1h-1zM1629 221h1v1h-1zM1629 225h1v1h-1zM1629 230h1v1h-1zM1629 234h1v1h-1zM1629 239h1v1h-1zM1629 244h1v1h-1zM1629 248h1v1h-1zM1629 253h1v1h-1zM1629 258h1v1h-1zM1629 262h1v1h-1zM1629 267h1v1h-1zM1629 272h1v1h-1zM1629 276h1v1h-1zM1629 281h1v1h-1zM1629 286h1v1h-1zM1629 290h1v1h-1zM1629 292h1v1h-1zM1629 297h1v1h-1zM1629 301h1v1h-1zM1629 306h1v1h-1zM1629 310h1v1h-1zM1629 315h1v1h-1zM1629 320h1v1h-1zM1629 324h1v1h-1zM1629 329h1v1h-1zM1629 334h1v1h-1zM1629 338h1v1h-1zM1629 343h1v1h-1zM1629 348h1v1h-1zM1629 352h1v1h-1zM1629 357h1v1h-1zM1629 362h1v1h-1zM1629 366h1v1h-1zM1629 371h1v1h-1zM1629 376h1v1h-1zM1629 380h1v1h-1zM1629 385h1v1h-1zM1629 389h1v1h-1zM1629 394h1v1h-1zM1629 399h1v1h-1zM1629 403h1v1h-1zM1629 408h1v1h-1zM1629 413h1v1h-1zM1629 417h1v1h-1zM1629 422h1v1h-1zM1629 427h1v1h-1zM1629 431h1v1h-1zM1629 436h1v1h-1zM1629 441h1v1h-1zM1629 445h1v1h-1zM1629 450h1v1h-1zM1629 455h1v1h-1zM1629 459h1v1h-1zM1629 464h1v1h-1zM1629 468h1v1h-1zM1629 473h1v1h-1zM1629 478h1v1h-1zM1629 482h1v1h-1zM1629 487h1v1h-1zM1629 492h1v1h-1zM1629 496h1v1h-1zM1629 501h1v1h-1zM1629 506h1v1h-1zM1629 510h1v1h-1zM1629 515h1v1h-1zM1629 520h1v1h-1zM1629 524h1v1h-1zM1629 526h1v1h-1zM1629 531h1v1h-1zM1629 535h1v1h-1zM1629 540h1v1h-1zM1629 544h1v1h-1zM1629 549h1v1h-1zM1629 554h1v1h-1zM1629 558h1v1h-1zM1629 563h1v1h-1zM1629 568h1v1h-1zM1629 572h1v1h-1zM1629 577h1v1h-1zM1629 582h1v1h-1zM1629 586h1v1h-1zM1629 591h1v1h-1zM1629 596h1v1h-1zM1629 600h1v1h-1zM1629 605h1v1h-1zM1629 610h1v1h-1zM1629 614h1v1h-1zM1629 619h1v1h-1zM1629 623h1v1h-1zM1629 628h1v1h-1zM1629 633h1v1h-1zM1629 637h1v1h-1zM1629 642h1v1h-1zM1629 647h1v1h-1zM1629 651h1v1h-1zM1629 656h1v1h-1zM1629 661h1v1h-1zM1629 665h1v1h-1zM1629 670h1v1h-1zM1629 675h1v1h-1zM1629 679h1v1h-1zM1629 684h1v1h-1zM1629 689h1v1h-1zM1629 693h1v1h-1zM1629 698h1v1h-1zM1629 702h1v1h-1zM1629 707h1v1h-1zM1629 712h1v1h-1zM1629 716h1v1h-1zM1629 721h1v1h-1zM1629 726h1v1h-1zM1629 730h1v1h-1zM1629 735h1v1h-1zM1629 740h1v1h-1zM1629 744h1v1h-1zM1629 749h1v1h-1zM1629 754h1v1h-1zM1629 758h1v1h-1zM1629 763h1v1h-1zM1629 768h1v1h-1zM1629 772h1v1h-1zM1629 777h1v1h-1zM1629 782h1v1h-1zM1629 786h1v1h-1zM1629 791h1v1h-1zM1629 796h1v1h-1zM1629 800h1v1h-1zM1629 805h1v1h-1zM1629 809h1v1h-1zM1629 814h1v1h-1zM1629 819h1v1h-1zM1629 823h1v1h-1zM1629 828h1v1h-1zM1629 833h1v1h-1zM1629 837h1v1h-1zM1629 842h1v1h-1zM1629 847h1v1h-1zM1629 851h1v1h-1zM1629 856h1v1h-1zM1629 861h1v1h-1zM1629 865h1v1h-1zM1629 870h1v1h-1zM1629 875h1v1h-1zM1629 879h1v1h-1zM1629 884h1v1h-1zM1629 888h1v1h-1zM1629 893h1v1h-1zM1629 898h1v1h-1zM1629 902h1v1h-1zM1629 907h1v1h-1zM1629 912h1v1h-1zM1629 916h1v1h-1zM1629 921h1v1h-1zM1629 926h1v1h-1zM1629 930h1v1h-1zM1629 935h1v1h-1zM1629 940h1v1h-1zM1629 944h1v1h-1zM1629 949h1v1h-1zM1629 953h1v1h-1zM1629 958h1v1h-1zM1629 963h1v1h-1zM1629 967h1v1h-1zM1629 972h1v1h-1zM1664 58h1v1h-1zM1664 81h1v1h-1zM1664 104h1v1h-1zM1664 128h1v1h-1zM1664 151h1v1h-1zM1664 174h1v1h-1zM1664 197h1v1h-1zM1664 221h1v1h-1zM1664 244h1v1h-1zM1664 267h1v1h-1zM1664 290h1v1h-1zM1664 292h1v1h-1zM1664 315h1v1h-1zM1664 338h1v1h-1zM1664 362h1v1h-1zM1664 385h1v1h-1zM1664 408h1v1h-1zM1664 431h1v1h-1zM1664 455h1v1h-1zM1664 478h1v1h-1zM1664 501h1v1h-1zM1664 524h1v1h-1zM1664 526h1v1h-1zM1664 549h1v1h-1zM1664 572h1v1h-1zM1664 596h1v1h-1zM1664 619h1v1h-1zM1664 642h1v1h-1zM1664 665h1v1h-1zM1664 689h1v1h-1zM1664 712h1v1h-1zM1664 735h1v1h-1zM1664 758h1v1h-1zM1664 763h1v1h-1zM1664 786h1v1h-1zM1664 809h1v1h-1zM1664 833h1v1h-1zM1664 856h1v1h-1zM1664 879h1v1h-1zM1664 902h1v1h-1zM1664 926h1v1h-1zM1664 949h1v1h-1zM1664 972h1v1h-1zM1699 58h1v1h-1zM1699 81h1v1h-1zM1699 104h1v1h-1zM1699 128h1v1h-1zM1699 151h1v1h-1zM1699 174h1v1h-1zM1699 197h1v1h-1zM1699 221h1v1h-1zM1699 244h1v1h-1zM1699 267h1v1h-1zM1699 290h1v1h-1zM1699 292h1v1h-1zM1699 315h1v1h-1zM1699 338h1v1h-1zM1699 362h1v1h-1zM1699 385h1v1h-1zM1699 408h1v1h-1zM1699 431h1v1h-1zM1699 455h1v1h-1zM1699 478h1v1h-1zM1699 501h1v1h-1zM1699 524h1v1h-1zM1699 526h1v1h-1zM1699 549h1v1h-1zM1699 572h1v1h-1zM1699 596h1v1h-1zM1699 619h1v1h-1zM1699 642h1v1h-1zM1699 665h1v1h-1zM1699 689h1v1h-1zM1699 712h1v1h-1zM1699 735h1v1h-1zM1699 758h1v1h-1zM1699 763h1v1h-1zM1699 786h1v1h-1zM1699 809h1v1h-1zM1699 833h1v1h-1zM1699 856h1v1h-1zM1699 879h1v1h-1zM1699 902h1v1h-1zM1699 926h1v1h-1zM1699 949h1v1h-1zM1699 972h1v1h-1zM1734 58h1v1h-1zM1734 81h1v1h-1zM1734 104h1v1h-1zM1734 128h1v1h-1zM1734 151h1v1h-1zM1734 174h1v1h-1zM1734 197h1v1h-1zM1734 221h1v1h-1zM1734 244h1v1h-1zM1734 267h1v1h-1zM1734 290h1v1h-1zM1734 292h1v1h-1zM1734 315h1v1h-1zM1734 338h1v1h-1zM1734 362h1v1h-1zM1734 385h1v1h-1zM1734 408h1v1h-1zM1734 431h1v1h-1zM1734 455h1v1h-1zM1734 478h1v1h-1zM1734 501h1v1h-1zM1734 524h1v1h-1zM1734 526h1v1h-1zM1734 549h1v1h-1zM1734 572h1v1h-1zM1734 596h1v1h-1zM1734 619h1v1h-1zM1734 642h1v1h-1zM1734 665h1v1h-1zM1734 689h1v1h-1zM1734 712h1v1h-1zM1734 735h1v1h-1zM1734 758h1v1h-1zM1734 763h1v1h-1zM1734 786h1v1h-1zM1734 809h1v1h-1zM1734 833h1v1h-1zM1734 856h1v1h-1zM1734 879h1v1h-1zM1734 902h1v1h-1zM1734 926h1v1h-1zM1734 949h1v1h-1zM1734 972h1v1h-1z" fill="#b4b4b4"/>
<rect x="3" y="290" width="1748" height="2" fill="#777"/>
<rect x="3" y="524" width="1748" height="2" fill="#777"/>
<rect x="3" y="758" width="1748" height="2" fill="#777"/>
<path d="M3 267.5 H1718" stroke="#000" stroke-width="1"/>
<path d="M3 267.5 H1718" stroke="#c4c4c4" stroke-width="1" stroke-dasharray="5 5"/>
<path d="M3 431.5 H1718" stroke="#000" stroke-width="1"/>
<path d="M3 431.5 H1718" stroke="#c4c4c4" stroke-width="1" stroke-dasharray="5 5"/>
<path d="M3 735.5 H1718" stroke="#000" stroke-width="1"/>
<path d="M3 735.5 H1718" stroke="#c4c4c4" stroke-width="1" stroke-dasharray="5 5"/>
<path d="M3 949.5 H1718" stroke="#000" stroke-width="1"/>
<path d="M3 949.5 H1718" stroke="#c4c4c4" stroke-width="1" stroke-dasharray="5 5"/>
<path d="M55.5 97V993" stroke="#c4c4c4" stroke-width="1" stroke-dasharray="5 5"/>
<g font-size="13.4">
<rect x="1715.44" y="75.3" width="30.56" height="12" fill="#000"/><text x="1745.5" y="85.9" fill="#e3e32a" text-anchor="end">40 V</text><rect x="1715.44" y="98.5" width="30.56" height="12" fill="#000"/><text x="1745.5" y="109.1" fill="#e3e32a" text-anchor="end">35 V</text><rect x="1715.44" y="121.8" width="30.56" height="12" fill="#000"/><text x="1745.5" y="132.4" fill="#e3e32a" text-anchor="end">30 V</text><rect x="1715.44" y="145" width="30.56" height="12" fill="#000"/><text x="1745.5" y="155.6" fill="#e3e32a" text-anchor="end">25 V</text><rect x="1715.44" y="168.2" width="30.56" height="12" fill="#000"/><text x="1745.5" y="178.8" fill="#e3e32a" text-anchor="end">20 V</text><rect x="1715.44" y="191.4" width="30.56" height="12" fill="#000"/><text x="1745.5" y="202" fill="#e3e32a" text-anchor="end">15 V</text><rect x="1715.44" y="214.7" width="30.56" height="12" fill="#000"/><text x="1745.5" y="225.3" fill="#e3e32a" text-anchor="end">10 V</text><rect x="1722.89" y="238" width="23.11" height="12" fill="#000"/><text x="1745.5" y="248.6" fill="#e3e32a" text-anchor="end">5 V</text><rect x="1722.89" y="261.5" width="23.11" height="12" fill="#000"/><text x="1745.5" y="272.1" fill="#e3e32a" text-anchor="end">0 V</text><rect x="1722.89" y="309.6" width="23.11" height="12" fill="#000"/><text x="1745.5" y="320.2" fill="#86c234" text-anchor="end">1 V</text><rect x="1696.83" y="332.9" width="49.17" height="12" fill="#000"/><text x="1745.5" y="343.5" fill="#86c234" text-anchor="end">800 mV</text><rect x="1696.83" y="356.2" width="49.17" height="12" fill="#000"/><text x="1745.5" y="366.8" fill="#86c234" text-anchor="end">600 mV</text><rect x="1696.83" y="379.5" width="49.17" height="12" fill="#000"/><text x="1745.5" y="390.1" fill="#86c234" text-anchor="end">400 mV</text><rect x="1696.83" y="402.8" width="49.17" height="12" fill="#000"/><text x="1745.5" y="413.4" fill="#86c234" text-anchor="end">200 mV</text><rect x="1722.89" y="425.5" width="23.11" height="12" fill="#000"/><text x="1745.5" y="436.1" fill="#86c234" text-anchor="end">0 V</text><rect x="1692.38" y="449" width="53.62" height="12" fill="#000"/><text x="1745.5" y="459.6" fill="#86c234" text-anchor="end">-200 mV</text><rect x="1692.38" y="472.3" width="53.62" height="12" fill="#000"/><text x="1745.5" y="482.9" fill="#86c234" text-anchor="end">-400 mV</text><rect x="1692.38" y="495.5" width="53.62" height="12" fill="#000"/><text x="1745.5" y="506.1" fill="#86c234" text-anchor="end">-600 mV</text><rect x="1671.52" y="543.6" width="74.48" height="12" fill="#000"/><text x="1745.5" y="554.2" fill="#de8d2e" text-anchor="end">587.063 mT</text><rect x="1671.52" y="566.8" width="74.48" height="12" fill="#000"/><text x="1745.5" y="577.4" fill="#de8d2e" text-anchor="end">513.680 mT</text><rect x="1671.52" y="590" width="74.48" height="12" fill="#000"/><text x="1745.5" y="600.6" fill="#de8d2e" text-anchor="end">440.297 mT</text><rect x="1671.52" y="613.3" width="74.48" height="12" fill="#000"/><text x="1745.5" y="623.9" fill="#de8d2e" text-anchor="end">366.914 mT</text><rect x="1671.52" y="636.5" width="74.48" height="12" fill="#000"/><text x="1745.5" y="647.1" fill="#de8d2e" text-anchor="end">293.532 mT</text><rect x="1671.52" y="659.8" width="74.48" height="12" fill="#000"/><text x="1745.5" y="670.4" fill="#de8d2e" text-anchor="end">220.149 mT</text><rect x="1671.52" y="683" width="74.48" height="12" fill="#000"/><text x="1745.5" y="693.6" fill="#de8d2e" text-anchor="end">146.766 mT</text><rect x="1678.97" y="706.3" width="67.03" height="12" fill="#000"/><text x="1745.5" y="716.9" fill="#de8d2e" text-anchor="end">73.383 mT</text><rect x="1723.89" y="729.5" width="22.11" height="12" fill="#000"/><text x="1745.5" y="740.1" fill="#de8d2e" text-anchor="end">0 T</text><rect x="1667.75" y="780.7" width="78.25" height="12" fill="#000"/><text x="1745.5" y="791.3" fill="#80379e" text-anchor="end">1.707152 kA</text><rect x="1667.75" y="804" width="78.25" height="12" fill="#000"/><text x="1745.5" y="814.6" fill="#80379e" text-anchor="end">1.463273 kA</text><rect x="1667.75" y="827.2" width="78.25" height="12" fill="#000"/><text x="1745.5" y="837.8" fill="#80379e" text-anchor="end">1.219395 kA</text><rect x="1682.64" y="850.4" width="63.36" height="12" fill="#000"/><text x="1745.5" y="861" fill="#80379e" text-anchor="end">975.516 A</text><rect x="1682.64" y="873.6" width="63.36" height="12" fill="#000"/><text x="1745.5" y="884.2" fill="#80379e" text-anchor="end">731.637 A</text><rect x="1682.64" y="896.8" width="63.36" height="12" fill="#000"/><text x="1745.5" y="907.4" fill="#80379e" text-anchor="end">487.758 A</text><rect x="1682.64" y="920" width="63.36" height="12" fill="#000"/><text x="1745.5" y="930.6" fill="#80379e" text-anchor="end">243.879 A</text><rect x="1723.62" y="943.3" width="22.38" height="12" fill="#000"/><text x="1745.5" y="953.9" fill="#80379e" text-anchor="end">0 A</text><rect x="1678.19" y="966.5" width="67.81" height="12" fill="#000"/><text x="1745.5" y="977.1" fill="#80379e" text-anchor="end">-243.879 A</text>
</g>
<g font-size="13" fill="#c2c2c2" text-anchor="middle">
<text x="55.5" y="987">0 s</text>
<text x="230.5" y="987">4.5 ms</text>
<text x="405.4" y="987">9 ms</text>
<text x="580.2" y="987">13.5 ms</text>
<text x="755.1" y="987">18 ms</text>
<text x="929.9" y="987">22.5 ms</text>
<text x="1104.8" y="987">27 ms</text>
<text x="1279.7" y="987">31.5 ms</text>
<text x="1454.5" y="987">36 ms</text>
<text x="1629.4" y="987">40.5 ms</text>
</g>
<path d="M3 735.5 L55 735.5 L56 734.99 L59 734.05 L62 733.12 L65 732.19 L68 731.26 L71 730.33 L74 729.4 L77 728.48 L80 727.56 L83 726.64 L86 725.72 L89 724.81 L92 723.9 L95 722.99 L98 722.08 L101 721.18 L104 720.27 L107 719.37 L110 718.48 L113 717.58 L116 716.69 L119 715.8 L122 714.91 L125 714.02 L128 713.13 L131 712.25 L134 711.37 L137 710.49 L140 709.62 L143 708.74 L146 707.87 L149 707 L152 706.14 L155 705.27 L158 704.41 L161 703.55 L164 702.69 L167 701.83 L170 700.98 L173 700.13 L176 699.28 L179 698.43 L182 697.59 L185 696.74 L188 695.9 L191 695.06 L194 694.23 L197 693.39 L200 692.56 L203 691.73 L206 690.9 L209 690.08 L212 689.25 L215 688.43 L218 687.61 L221 686.8 L224 685.98 L227 685.17 L230 684.36 L233 683.55 L236 682.74 L239 681.94 L242 681.14 L245 680.34 L248 679.54 L251 678.75 L254 677.95 L257 677.16 L260 676.37 L263 675.59 L266 674.8 L269 674.02 L272 673.24 L275 672.46 L278 671.68 L281 670.91 L284 670.14 L287 669.37 L290 668.6 L293 667.84 L296 667.08 L299 666.31 L302 665.56 L305 664.8 L308 664.05 L311 663.3 L314 662.55 L317 661.8 L320 661.05 L323 660.31 L326 659.57 L329 658.83 L332 658.1 L335 657.36 L338 656.63 L341 655.9 L344 655.17 L347 654.45 L350 653.73 L353 653.01 L356 652.29 L359 651.57 L362 650.86 L365 650.15 L368 649.44 L371 648.73 L374 648.03 L377 647.32 L380 646.62 L383 645.93 L386 645.23 L389 644.54 L392 643.85 L395 643.16 L398 642.47 L401 641.79 L404 641.11 L407 640.43 L410 639.75 L413 639.08 L416 638.4 L419 637.73 L422 637.07 L425 636.4 L428 635.74 L431 635.08 L434 634.42 L437 633.76 L440 633.11 L443 632.46 L446 631.81 L449 631.17 L452 630.52 L455 629.88 L458 629.24 L461 628.6 L464 627.97 L467 627.34 L470 626.71 L473 626.08 L476 625.46 L479 624.83 L482 624.22 L485 623.6 L488 622.98 L491 622.37 L494 621.76 L497 621.15 L500 620.55 L503 619.95 L506 619.35 L509 618.75 L512 618.15 L515 617.56 L518 616.97 L521 616.38 L524 615.8 L527 615.21 L530 614.63 L533 614.06 L536 613.48 L539 612.91 L542 612.34 L545 611.77 L548 611.2 L551 610.64 L554 610.08 L557 609.52 L560 608.97 L563 608.42 L566 607.87 L569 607.32 L572 606.77 L575 606.23 L578 605.69 L581 605.15 L584 604.62 L587 604.09 L590 603.56 L593 603.03 L596 602.51 L599 601.99 L602 601.47 L605 600.95 L608 600.44 L611 599.92 L614 599.41 L617 598.91 L620 598.4 L623 597.9 L626 597.41 L629 596.91 L632 596.42 L635 595.93 L638 595.44 L641 594.95 L644 594.47 L647 593.99 L650 593.51 L653 593.04 L656 592.56 L659 592.09 L662 591.63 L665 591.16 L668 590.7 L671 590.24 L674 589.79 L677 589.33 L680 588.88 L683 588.43 L686 587.99 L689 587.54 L692 587.1 L695 586.67 L698 586.23 L701 585.8 L704 585.37 L707 584.94 L710 584.52 L713 584.09 L716 583.67 L719 583.26 L722 582.84 L725 582.43 L728 582.02 L731 581.62 L734 581.21 L737 580.81 L740 580.42 L743 580.02 L746 579.63 L749 579.24 L752 578.85 L755 578.47 L758 578.08 L761 577.71 L764 577.33 L767 576.96 L770 576.58 L773 576.22 L776 575.85 L779 575.49 L782 575.13 L785 574.77 L788 574.41 L791 574.06 L794 573.71 L797 573.36 L800 573.02 L803 572.68 L806 572.34 L809 572 L812 571.67 L815 571.34 L818 571.01 L821 570.68 L824 570.36 L827 570.04 L830 569.72 L833 569.4 L836 569.09 L839 568.78 L842 568.47 L845 568.17 L848 567.87 L851 567.57 L854 567.27 L857 566.98 L860 566.69 L863 566.4 L866 566.11 L869 565.83 L872 565.55 L875 565.27 L878 564.99 L881 564.72 L884 564.45 L887 564.18 L890 563.92 L893 563.65 L896 563.39 L899 563.14 L902 562.88 L905 562.63 L908 562.38 L911 562.13 L914 561.89 L917 561.65 L920 561.41 L923 561.17 L926 560.94 L929 560.71 L932 560.48 L935 560.25 L938 560.03 L941 559.8 L944 559.59 L947 559.37 L950 559.16 L953 558.95 L956 558.74 L959 558.53 L962 558.33 L965 558.13 L968 557.93 L971 557.73 L974 557.54 L977 557.35 L980 557.16 L983 556.97 L986 556.79 L989 556.61 L992 556.43 L995 556.25 L998 556.08 L1001 555.91 L1004 555.74 L1007 555.57 L1010 555.41 L1013 555.25 L1016 555.09 L1019 554.93 L1022 554.78 L1025 554.63 L1028 554.48 L1031 554.33 L1034 554.19 L1037 554.05 L1040 553.91 L1043 553.77 L1046 553.63 L1049 553.5 L1052 553.37 L1055 553.24 L1058 553.12 L1061 553 L1064 552.88 L1067 552.76 L1070 552.64 L1073 552.53 L1076 552.42 L1079 552.31 L1082 552.2 L1085 552.1 L1088 551.99 L1091 551.9 L1094 551.8 L1097 551.7 L1100 551.61 L1103 551.52 L1106 551.43 L1109 551.34 L1112 551.26 L1115 551.18 L1118 551.1 L1121 551.02 L1124 550.95 L1127 550.88 L1130 550.8 L1133 550.74 L1136 550.67 L1139 550.61 L1142 550.54 L1145 550.49 L1148 550.43 L1151 550.37 L1154 550.32 L1157 550.27 L1160 550.22 L1163 550.17 L1166 550.13 L1169 550.09 L1172 550.05 L1175 550.01 L1178 549.97 L1181 549.94 L1184 549.91 L1187 549.88 L1190 549.85 L1193 549.82 L1196 549.8 L1199 549.78 L1202 549.76 L1205 549.74 L1208 549.73 L1211 549.71 L1214 549.7 L1217 549.69 L1220 549.68 L1223 549.68 L1226 549.68 L1229 549.67 L1232 549.68 L1235 549.68 L1238 549.68 L1241 549.69 L1244 549.7 L1247 549.71 L1250 549.72 L1253 549.74 L1256 549.75 L1259 549.77 L1262 549.79 L1265 549.81 L1268 549.84 L1271 549.86 L1274 549.89 L1277 549.92 L1280 549.95 L1283 549.99 L1286 550.02 L1289 550.06 L1292 550.1 L1295 550.14 L1298 550.18 L1301 550.23 L1304 550.27 L1307 550.32 L1310 550.37 L1313 550.42 L1316 550.48 L1319 550.53 L1322 550.59 L1325 550.65 L1328 550.71 L1331 550.77 L1334 550.84 L1337 550.9 L1340 550.97 L1343 551.04 L1346 551.11 L1349 551.19 L1352 551.26 L1355 551.34 L1358 551.42 L1361 551.5 L1364 551.58 L1367 551.66 L1370 551.75 L1373 551.84 L1376 551.93 L1379 552.02 L1382 552.11 L1385 552.2 L1388 552.3 L1391 552.4 L1394 552.5 L1397 552.6 L1400 552.7 L1403 552.8 L1406 552.91 L1409 553.02 L1412 553.13 L1415 553.24 L1418 553.35 L1421 553.47 L1424 553.58 L1427 553.7 L1430 553.82 L1433 553.94 L1436 554.06 L1439 554.19 L1442 554.31 L1445 554.44 L1448 554.57 L1451 554.7 L1454 554.84 L1457 554.97 L1460 555.11 L1463 555.25 L1466 555.38 L1469 555.53 L1472 555.67 L1475 555.81 L1478 555.96 L1481 556.11 L1484 556.26 L1487 556.41 L1490 556.56 L1493 556.72 L1496 556.87 L1499 557.03 L1502 557.19 L1505 557.35 L1508 557.51 L1511 557.68 L1514 557.85 L1517 558.01 L1520 558.18 L1523 558.35 L1526 558.53 L1529 558.7 L1532 558.88 L1535 559.06 L1538 559.24 L1541 559.42 L1544 559.6 L1547 559.79 L1550 559.97 L1553 560.16 L1556 560.35 L1559 560.54 L1562 560.74 L1565 560.93 L1568 561.13 L1571 561.33 L1574 561.53 L1577 561.73 L1580 561.94 L1583 562.14 L1586 562.35 L1589 562.56 L1592 562.77 L1595 562.99 L1598 563.2 L1601 563.42 L1604 563.64 L1607 563.86 L1610 564.08 L1613 564.31 L1616 564.53 L1619 564.76 L1622 564.99 L1625 565.22 L1628 565.46 L1631 565.69 L1634 565.93 L1637 566.17 L1640 566.42 L1643 566.66 L1646 566.91 L1649 567.15 L1652 567.4 L1655 567.66 L1658 567.91 L1661 568.17 L1664 568.43 L1667 568.69 L1670 568.95 L1673 569.21 L1676 569.48 L1679 569.75 L1682 570.02 L1685 570.29 L1688 570.57 L1691 570.85 L1694 571.13 L1697 571.41 L1700 571.7 L1703 571.98 L1706 572.27 L1709 572.57 L1712 572.86 L1715 573.16 L1718 573.46 L1721 573.76 L1724 574.06 L1727 574.37 L1730 574.68 L1733 574.99 L1736 575.3 L1739 575.62 L1742 575.94 L1745 576.26 L1748 576.59 L1751 576.91" fill="none" stroke="#f39a2a" stroke-width="1.5" shape-rendering="crispEdges"/>
<path d="M3 430.19 L5.01 430.09 L7.02 430.39 L9.03 430.04 L11.05 430.32 L13.06 430.22 L15.07 430.03 L17.08 430.3 L19.09 430.02 L21.1 430.26 L23.11 430.04 L25.12 430.05 L27.14 430.25 L29.15 430.5 L31.16 430.07 L33.17 430.13 L35.18 430.38 L37.19 430.57 L39.2 430.35 L41.22 430.24 L43.23 430.59 L45.24 430.03 L47.25 430.52 L49.26 430.17 L51.27 430.09 L53.28 430.07 L55.3 430.19 L57.31 430.49 L59.32 430.11 L61.33 430.35 L63.34 430.38 L65.35 430.22 L67.36 430.33 L69.38 430.04 L71.39 430.04 L73.4 430.12 L75.41 430.41 L77.42 430.26 L79.43 430.19 L81.44 430.35 L83.45 430.27 L85.47 430.18 L87.48 430.48 L89.49 430.42 L91.5 430.15 L93.51 430.34 L95.52 430.32 L97.53 430.53 L99.55 430.44 L101.56 430.17 L103.57 430.59 L105.58 430.07 L107.59 430.25 L109.6 430.45 L111.61 430.09 L113.62 430.29 L115.64 430.02 L117.65 430.4 L119.66 430.46 L121.67 430.34 L123.68 430.53 L125.69 430.19 L127.7 430.42 L129.72 430.36 L131.73 430.35 L133.74 430.27 L135.75 430.5 L137.76 430.57 L139.77 430.28 L141.78 430.4 L143.8 430.04 L145.81 430.42 L147.82 430.39 L149.83 430.6 L151.84 430.49 L153.85 430.17 L155.86 430.23 L157.88 430.4 L159.89 430.01 L161.9 430.28 L163.91 430.1 L165.92 430.07 L167.93 430.04 L169.94 430.46 L171.95 430.08 L173.97 430.15 L175.98 430.23 L177.99 430.52 L180 430.05 L182.12 430.23 L184.25 430.25 L186.38 430.42 L188.5 430.34 L190.62 430.33 L192.75 429.94 L194.88 429.99 L197 429.92 L199.5 429.73 L202 429.27 L204 428.04 L206 427.31 L208 426.59 L210 425.84 L212 425.24 L214 424.55 L216 423.61 L218 422.7 L220 422.2 L222 421.42 L224 420.79 L226 420.27 L228 419.36 L230 418.51 L232 417.74 L234 416.94 L236 415.73 L238 415.41 L240 414.5 L242 413.72 L244 412.85 L246 411.77 L248 410.94 L250 409.93 L252 409.41 L254 408.24 L256 407.41 L258 406.66 L260 405.8 L262 405.4 L264 404.73 L266 404.2 L268 403.79 L270 403.26 L272 403.4 L274 403.18 L276 403.67 L278 403.5 L280 403.21 L282 403.25 L284 403.29 L286 403.29 L288 403.12 L290 403.54 L292 403.61 L294 403.28 L296.2 403.53 L298.4 403.53 L300.6 403.78 L302.8 404.17 L305 404.36 L307.08 404.86 L309.17 404.63 L311.25 404.71 L313.33 405.44 L315.42 405.35 L317.5 405.29 L319.58 405.69 L321.67 405.55 L323.75 406.02 L325.83 406.45 L327.92 406.55 L330 406.62 L332.08 406.52 L334.17 406.75 L336.25 406.8 L338.33 407.33 L340.42 407.35 L342.5 407.67 L344.58 407.56 L346.67 407.67 L348.75 408.19 L350.83 408.46 L352.92 408.54 L355 408.68 L357.08 408.86 L359.17 408.98 L361.25 408.84 L363.33 409.18 L365.42 409.25 L367.5 409.22 L369.58 409.38 L371.67 409.7 L373.75 409.86 L375.83 410.28 L377.92 410.61 L380 410.47 L382.14 410.76 L384.29 410.79 L386.43 410.77 L388.57 410.42 L390.71 410.33 L392.86 410.34 L395 410.32 L397 411.42 L399 412.77 L401 414.04 L403 415.1 L405 415.99 L407.14 416.88 L409.29 417.75 L411.43 418.11 L413.57 419.24 L415.71 420.17 L417.86 420.88 L420 421.65 L422 421.89 L424 422.11 L426 422.87 L428 423 L430 423.68 L432 424.18 L434 424.24 L436 424.64 L438 425.37 L440 425.63 L442 425.6 L444 425.88 L446 426.19 L448 426.94 L450 427.18 L452 427.09 L454 427.8 L456 428.19 L458 428.29 L460 428.41 L462.14 428.67 L464.29 428.56 L466.43 428.64 L468.57 429.35 L470.71 429.3 L472.86 429.37 L475 429.76 L477.08 429.5 L479.17 429.81 L481.25 429.82 L483.33 429.49 L485.42 429.56 L487.5 429.63 L489.58 429.64 L491.67 429.89 L493.75 429.73 L495.83 429.87 L497.92 429.74 L500 430.25 L502 429.91 L504 429.98 L506 430.05 L508.01 430.24 L510.01 429.95 L512.01 430.25 L514.01 430 L516.01 430.02 L518.01 430.02 L520.02 429.72 L522.02 429.97 L524.02 429.82 L526.02 429.71 L528.02 430.19 L530.02 429.81 L532.03 429.99 L534.03 430.14 L536.03 430.04 L538.03 429.9 L540.03 430.02 L542.03 430.04 L544.04 430.18 L546.04 429.77 L548.04 430.05 L550.04 429.86 L552.04 429.88 L554.04 430.18 L556.04 430.02 L558.05 430.05 L560.05 430.17 L562.05 430.26 L564.05 429.98 L566.05 430.08 L568.05 430.02 L570.06 430.02 L572.06 430.13 L574.06 429.99 L576.06 430.04 L578.06 430.01 L580.06 430.28 L582.07 430.14 L584.07 430.25 L586.07 430.29 L588.07 429.88 L590.07 430.06 L592.07 430.29 L594.08 430.23 L596.08 429.81 L598.08 429.8 L600.08 429.99 L602.08 429.77 L604.08 429.87 L606.08 429.77 L608.09 430.13 L610.09 430.2 L612.09 430.27 L614.09 429.82 L616.09 430.16 L618.09 430.12 L620.1 429.81 L622.1 430.26 L624.1 430.31 L626.1 429.86 L628.1 430.3 L630.1 429.97 L632.11 430.02 L634.11 430.33 L636.11 430.23 L638.11 429.83 L640.11 429.99 L642.11 430.04 L644.12 429.94 L646.12 429.85 L648.12 429.93 L650.12 430.17 L652.12 429.75 L654.12 430.07 L656.12 430 L658.13 429.75 L660.13 429.94 L662.13 430.11 L664.13 430.05 L666.13 429.78 L668.13 430.33 L670.14 430.21 L672.14 430.32 L674.14 429.8 L676.14 429.9 L678.14 429.77 L680.14 430.21 L682.15 429.91 L684.15 429.82 L686.15 430 L688.15 430.29 L690.15 430.24 L692.15 429.9 L694.16 429.84 L696.16 430.3 L698.16 430.09 L700.16 430.17 L702.16 429.8 L704.16 429.78 L706.16 430.16 L708.17 430.01 L710.17 429.79 L712.17 430.31 L714.17 430.13 L716.17 430.23 L718.17 429.8 L720.18 430.27 L722.18 429.79 L724.18 430.27 L726.18 430.03 L728.18 429.96 L730.18 430.09 L732.19 430.31 L734.19 429.92 L736.19 429.83 L738.19 430.07 L740.19 429.9 L742.19 429.82 L744.2 429.86 L746.2 429.79 L748.2 429.88 L750.2 429.95 L752.2 429.94 L754.2 430.22 L756.2 429.94 L758.21 430.06 L760.21 429.87 L762.21 429.97 L764.21 429.77 L766.21 429.91 L768.21 429.77 L770.22 430.2 L772.22 430.1 L774.22 429.88 L776.22 430.05 L778.22 430.33 L780.22 429.83 L782.23 430.26 L784.23 430.03 L786.23 430.07 L788.23 430.27 L790.23 430.01 L792.23 430.07 L794.24 430.18 L796.24 430.36 L798.24 429.98 L800.24 430.27 L802.24 430.2 L804.24 430.15 L806.24 430.02 L808.25 429.98 L810.25 429.81 L812.25 429.85 L814.25 429.82 L816.25 430.22 L818.25 429.93 L820.26 429.87 L822.26 429.83 L824.26 430.28 L826.26 430.3 L828.26 430.18 L830.26 429.95 L832.27 429.93 L834.27 429.96 L836.27 430.06 L838.27 429.88 L840.27 430.05 L842.27 429.94 L844.28 430.36 L846.28 430.37 L848.28 430.11 L850.28 429.93 L852.28 430.36 L854.28 429.97 L856.28 430 L858.29 429.79 L860.29 430.02 L862.29 430.07 L864.29 430.09 L866.29 429.91 L868.29 430.09 L870.3 429.79 L872.3 429.95 L874.3 429.84 L876.3 430.03 L878.3 429.82 L880.3 429.8 L882.31 429.97 L884.31 429.93 L886.31 430.14 L888.31 430.11 L890.31 430.24 L892.31 430.19 L894.32 430.22 L896.32 430.32 L898.32 430.03 L900.32 429.99 L902.32 430.39 L904.32 429.89 L906.32 430.23 L908.33 430.18 L910.33 429.82 L912.33 430.3 L914.33 430.33 L916.33 430.18 L918.33 430.24 L920.34 430.29 L922.34 429.88 L924.34 430.12 L926.34 430.1 L928.34 430.3 L930.34 430.29 L932.35 430.3 L934.35 430.15 L936.35 430.34 L938.35 430.21 L940.35 430.22 L942.35 429.94 L944.36 429.83 L946.36 429.89 L948.36 430.02 L950.36 429.87 L952.36 430.31 L954.36 430.14 L956.36 430.19 L958.37 430.19 L960.37 430.22 L962.37 430.1 L964.37 429.81 L966.37 430.29 L968.37 430.26 L970.38 430.11 L972.38 430.13 L974.38 430.21 L976.38 429.85 L978.38 430.26 L980.38 429.97 L982.39 429.86 L984.39 429.98 L986.39 430.25 L988.39 429.94 L990.39 430.26 L992.39 430.4 L994.4 430.11 L996.4 430.05 L998.4 430.11 L1000.4 430.23 L1002.4 430.28 L1004.4 430.19 L1006.4 430.21 L1008.41 429.87 L1010.41 429.91 L1012.41 429.98 L1014.41 430.27 L1016.41 430.01 L1018.41 430.16 L1020.42 429.83 L1022.42 429.86 L1024.42 429.99 L1026.42 430.23 L1028.42 430.24 L1030.42 430.23 L1032.43 430 L1034.43 430.14 L1036.43 430.11 L1038.43 430.11 L1040.43 429.9 L1042.43 430.37 L1044.44 429.95 L1046.44 430.42 L1048.44 430.39 L1050.44 429.84 L1052.44 430.11 L1054.44 430.32 L1056.44 430.41 L1058.45 430.1 L1060.45 430 L1062.45 429.96 L1064.45 430.4 L1066.45 429.96 L1068.45 430.19 L1070.46 429.92 L1072.46 430.15 L1074.46 430.41 L1076.46 429.92 L1078.46 430.33 L1080.46 430.14 L1082.47 430.37 L1084.47 430.26 L1086.47 429.98 L1088.47 430.38 L1090.47 430.13 L1092.47 429.86 L1094.48 429.84 L1096.48 430.14 L1098.48 430.11 L1100.48 430.03 L1102.48 429.93 L1104.48 430.05 L1106.48 430.04 L1108.49 430.35 L1110.49 429.85 L1112.49 430.3 L1114.49 430.35 L1116.49 429.92 L1118.49 430.4 L1120.5 430.28 L1122.5 430.39 L1124.5 430.02 L1126.5 430.07 L1128.5 430.09 L1130.5 430.45 L1132.51 430.21 L1134.51 430.07 L1136.51 430.11 L1138.51 430.02 L1140.51 429.88 L1142.51 429.92 L1144.52 430.36 L1146.52 430.03 L1148.52 430.42 L1150.52 430.01 L1152.52 430.02 L1154.52 430.16 L1156.52 429.97 L1158.53 430.08 L1160.53 430.43 L1162.53 430.39 L1164.53 430.35 L1166.53 430.24 L1168.53 430.41 L1170.54 430.43 L1172.54 430.19 L1174.54 430.29 L1176.54 429.89 L1178.54 430.3 L1180.54 430.13 L1182.55 430.32 L1184.55 430.25 L1186.55 430.04 L1188.55 429.89 L1190.55 430.42 L1192.55 429.94 L1194.56 430.15 L1196.56 430.07 L1198.56 430.05 L1200.56 430.31 L1202.56 430.45 L1204.56 430.03 L1206.56 430.26 L1208.57 430.05 L1210.57 430.2 L1212.57 430.11 L1214.57 429.97 L1216.57 429.97 L1218.57 430 L1220.58 430.42 L1222.58 430.17 L1224.58 430.01 L1226.58 430.42 L1228.58 430.47 L1230.58 430.15 L1232.59 429.96 L1234.59 429.99 L1236.59 429.93 L1238.59 430.08 L1240.59 429.93 L1242.59 430.02 L1244.6 430.03 L1246.6 430.22 L1248.6 430.41 L1250.6 430.33 L1252.6 430.13 L1254.6 430.13 L1256.6 430.2 L1258.61 430.11 L1260.61 430.09 L1262.61 429.92 L1264.61 430.05 L1266.61 430.46 L1268.61 429.96 L1270.62 430.19 L1272.62 430.26 L1274.62 430.4 L1276.62 430.02 L1278.62 430.05 L1280.62 430.04 L1282.63 430.13 L1284.63 430.16 L1286.63 430.46 L1288.63 430.4 L1290.63 430.41 L1292.63 429.9 L1294.64 429.91 L1296.64 430.32 L1298.64 430.43 L1300.64 430.18 L1302.64 430.24 L1304.64 429.89 L1306.64 430.13 L1308.65 430.45 L1310.65 430.39 L1312.65 430.41 L1314.65 430.48 L1316.65 430.04 L1318.65 429.96 L1320.66 429.99 L1322.66 430.21 L1324.66 430.31 L1326.66 430.46 L1328.66 430.33 L1330.66 430.29 L1332.67 430.36 L1334.67 430.17 L1336.67 430.23 L1338.67 429.92 L1340.67 430.37 L1342.67 430.04 L1344.68 430.45 L1346.68 430.29 L1348.68 430.09 L1350.68 429.98 L1352.68 430.06 L1354.68 430.29 L1356.68 430.32 L1358.69 429.97 L1360.69 429.95 L1362.69 430.22 L1364.69 430.26 L1366.69 430.14 L1368.69 430.04 L1370.7 430.27 L1372.7 429.92 L1374.7 430.09 L1376.7 430.19 L1378.7 430.49 L1380.7 430.3 L1382.71 430.44 L1384.71 430.2 L1386.71 430.05 L1388.71 430.06 L1390.71 430.49 L1392.71 430.34 L1394.72 430.1 L1396.72 429.93 L1398.72 430.21 L1400.72 430.32 L1402.72 430.17 L1404.72 430.07 L1406.72 430.32 L1408.73 430.47 L1410.73 430.05 L1412.73 429.94 L1414.73 430.12 L1416.73 430.17 L1418.73 430.33 L1420.74 430.04 L1422.74 430.4 L1424.74 430.37 L1426.74 430.23 L1428.74 430.05 L1430.74 430.51 L1432.75 430.11 L1434.75 430.42 L1436.75 430.06 L1438.75 430.06 L1440.75 430.38 L1442.75 430.1 L1444.76 430.5 L1446.76 430.22 L1448.76 430.04 L1450.76 430.06 L1452.76 430.18 L1454.76 430.33 L1456.76 430.5 L1458.77 430.02 L1460.77 430.17 L1462.77 430.06 L1464.77 430.52 L1466.77 430.02 L1468.77 429.96 L1470.78 429.97 L1472.78 430.17 L1474.78 430.47 L1476.78 430.46 L1478.78 430.37 L1480.78 430.53 L1482.79 430.49 L1484.79 430.13 L1486.79 430.05 L1488.79 430.5 L1490.79 430.39 L1492.79 429.96 L1494.8 430.34 L1496.8 430.17 L1498.8 430.16 L1500.8 430.14 L1502.8 430.04 L1504.8 429.94 L1506.8 430.11 L1508.81 430.15 L1510.81 430.52 L1512.81 430.02 L1514.81 430.52 L1516.81 430.07 L1518.81 430.16 L1520.82 430.44 L1522.82 430.44 L1524.82 430.21 L1526.82 429.98 L1528.82 430.23 L1530.82 430.17 L1532.83 430.5 L1534.83 430.06 L1536.83 430.17 L1538.83 430.49 L1540.83 429.97 L1542.83 430.2 L1544.84 430.44 L1546.84 430.41 L1548.84 429.98 L1550.84 429.97 L1552.84 429.99 L1554.84 430.51 L1556.84 430.11 L1558.85 430.4 L1560.85 430.49 L1562.85 430.16 L1564.85 430.12 L1566.85 430.53 L1568.85 430.33 L1570.86 430.11 L1572.86 430.39 L1574.86 430.15 L1576.86 430.12 L1578.86 429.96 L1580.86 430.41 L1582.87 430.51 L1584.87 430.34 L1586.87 430.53 L1588.87 429.98 L1590.87 430.1 L1592.87 430.25 L1594.88 430.54 L1596.88 430.54 L1598.88 430.2 L1600.88 430.11 L1602.88 430.22 L1604.88 430.26 L1606.88 430.52 L1608.89 430.08 L1610.89 430.45 L1612.89 430.41 L1614.89 430.46 L1616.89 430.43 L1618.89 430.33 L1620.9 430.17 L1622.9 430.16 L1624.9 430.19 L1626.9 430.44 L1628.9 430.02 L1630.9 430.09 L1632.91 430.42 L1634.91 430.12 L1636.91 430.01 L1638.91 429.99 L1640.91 430.31 L1642.91 430.17 L1644.92 430.56 L1646.92 430.51 L1648.92 430.57 L1650.92 430.13 L1652.92 430.03 L1654.92 430.03 L1656.92 430.28 L1658.93 430.4 L1660.93 430.25 L1662.93 430.12 L1664.93 430.23 L1666.93 430.35 L1668.93 430.38 L1670.94 430.43 L1672.94 430.49 L1674.94 430.38 L1676.94 430.05 L1678.94 430.49 L1680.94 430.16 L1682.95 430.32 L1684.95 430.21 L1686.95 430.43 L1688.95 430.1 L1690.95 430.13 L1692.95 430.13 L1694.96 430.08 L1696.96 430.52 L1698.96 430.33 L1700.96 430.18 L1702.96 430.23 L1704.96 430.58 L1706.96 430.29 L1708.97 430.13 L1710.97 430.48 L1712.97 430.38 L1714.97 430.59 L1716.97 430.05 L1718.97 430.28 L1720.98 430.48 L1722.98 430.5 L1724.98 430.54 L1726.98 430.02 L1728.98 430.17 L1730.98 430.07 L1732.99 430.11 L1734.99 430.58 L1736.99 430.35 L1738.99 430.56 L1740.99 430.22 L1742.99 430.52 L1745 430.27 L1747 430.16 L1749 430.47 L1751 430.3" fill="none" stroke="#8ed52c" stroke-width="2" shape-rendering="crispEdges"/>
<path d="M3 265.77 L5.01 265.27 L7.02 265.57 L9.02 265.58 L11.03 265.35 L13.04 265.44 L15.05 265.31 L17.05 265.35 L19.06 265.38 L21.07 265.59 L23.08 265.63 L25.08 265.36 L27.09 265.25 L29.1 265.45 L31.11 265.66 L33.12 265.37 L35.12 265.45 L37.13 265.39 L39.14 265.75 L41.15 265.6 L43.15 265.31 L45.16 265.34 L47.17 265.52 L49.18 265.62 L51.18 265.68 L53.19 265.35 L55.2 265.4 L56 260.32 L56.5 271.65 L57 262.87 L58 265.88 L60 265.27 L61 266.39 L62 265.54 L63 265.91 L64 271.65 L64.5 255.22 L65 262.3 L66 256.92 L68 255.07 L70 253.64 L72 251.66 L74 249.87 L76 248.74 L78 246.95 L80 245.69 L82 243.94 L84.33 242.56 L86.67 240.64 L89 238.8 L91.25 237.58 L93.5 236.78 L95.75 235.71 L98 234.75 L100 233.32 L102 232.72 L104 231.64 L106 230.79 L108 229.64 L110 228.8 L112 228.01 L114.17 227.59 L116.33 226.43 L118.5 225.99 L120.67 225.52 L122.83 224.95 L125 223.82 L127 223.28 L129 223.27 L131 222.79 L133 221.99 L135 221.23 L137 221.26 L139.17 220.6 L141.33 220.58 L143.5 220.07 L145.67 219.86 L147.83 219.13 L150 219.17 L152 218.58 L154 218.44 L156 218.46 L158 218.2 L160 217.56 L162 217.33 L164.17 217.19 L166.33 217.01 L168.5 216.68 L170.67 216.27 L172.83 216.1 L175 216.13 L177 216.07 L179 215.39 L181 215.54 L183 215.49 L185 214.89 L187 215.2 L189.25 214.77 L191.5 215.06 L193.75 215.03 L196 215.08 L198 215.38 L200 215.95 L202.5 218.55 L205 220.96 L207.33 221.6 L209.67 221.97 L212 222.46 L214.17 222.21 L216.33 222.57 L218.5 222.49 L220.67 222.34 L222.83 222.66 L225 222.67 L227 222.47 L229 222.31 L231 222.48 L233 222.26 L235 222.28 L237 222.96 L239 223.26 L241 223.97 L243 224.51 L245 224.72 L247 225.68 L249 225.95 L251 226.94 L253 227.57 L255 228.01 L257 228.33 L259 229.2 L261 229.73 L263 230.67 L265 230.78 L267 231.51 L269 231.9 L271 232.04 L273 232.39 L275 232.32 L277.14 232.72 L279.29 232.35 L281.43 232.56 L283.57 232.46 L285.71 231.94 L287.86 232.24 L290 232.26 L292.14 231.6 L294.29 231.62 L296.43 231.73 L298.57 231.22 L300.71 231.52 L302.86 231.01 L305 231.19 L307 230.39 L309 230.2 L311 230.05 L313 229.22 L315 228.86 L317.25 228.38 L319.5 227.64 L321.75 226.85 L324 226.31 L326 227.13 L328 228.43 L330 229.11 L332 229.84 L334 230 L336 230.97 L338 231.17 L340 232.02 L342.14 232.15 L344.29 232.06 L346.43 232.44 L348.57 232.32 L350.71 232.41 L352.86 232.66 L355 232.26 L357.5 233.55 L360 234.08 L363.5 229.44 L365 231.18 L367 230.98 L369 231.54 L371 231.42 L373 231.42 L375 229.66 L377 228.97 L379 228.31 L381 226.15 L384 225.23 L384.5 217.19 L386 214.85 L388 212.08 L389 209.29 L390 205.55 L390.5 200.1 L391.5 190.89 L394.5 190.7 L394.5 181.72 L395.5 181.79 L395.5 173.07 L397 170.96 L398.5 169.51 L400 170.74 L402 172.4 L404 174.59 L406 176.97 L408 178.71 L410 179.2 L412 179.91 L414 181.64 L416 183.66 L418 185.46 L420 187.55 L422.5 188.8 L425 189.82 L427.5 192.07 L430 193.98 L432.5 195.28 L435 197.26 L437.5 197.35 L440 197.79 L442.5 198.51 L445 199.58 L447.14 200.51 L449.29 201.24 L451.43 201.8 L453.57 202.5 L455.71 203.14 L457.86 204.3 L460 205.04 L462 205.51 L464 206.29 L466 206.77 L468 207.66 L470 208.14 L472 208.35 L474 209.24 L476 209.23 L478 210.02 L480 210.44 L482 210.59 L484 210.74 L486 211.42 L488 211.21 L490 211.78 L492 212.26 L494 212.04 L496 212.32 L498 212.81 L500 213 L502 213.38 L504 213.79 L506 213.7 L508 214.09 L510 214.38 L512 214.53 L514 215.33 L516 215.57 L518 215.83 L520 215.7 L522 216.61 L524 216.95 L526 217.18 L528 217.75 L530 217.97 L532 218.24 L534 218.56 L536 219.04 L538 219.32 L540 219.9 L542 220.35 L544 220.52 L546 220.81 L548 220.93 L550 220.86 L552 221.23 L554 221.36 L556 221.77 L558 221.81 L560 221.86 L562 222.24 L564 222.58 L566 222.28 L568 222.83 L570 222.46 L572 222.76 L574 222.89 L576 223.35 L578 223.62 L580 223.65 L582 223.65 L584 224.23 L586 224.15 L588 224.34 L590 224.99 L592 225.08 L594 225.37 L596 225.6 L598 226.04 L600 225.98 L602 226.5 L604 226.72 L606 227.11 L608 227.16 L610 227.63 L612 227.84 L614 227.98 L616 228.23 L618 228.77 L620 228.75 L622 229.55 L624 229.39 L626 229.62 L628 229.96 L630 230.76 L632 230.71 L634 230.89 L636 231.12 L638 231.42 L640 232.12 L642 232.48 L644 232.92 L646 233.34 L648 233.34 L650 234.05 L652 234.32 L654 234.99 L656 235.39 L658 235.83 L660 235.74 L662 236.42 L664 236.65 L666 236.87 L668 236.56 L670 236.82 L672 236.97 L674 237.12 L676 237.81 L678 237.99 L680 238.08 L682 238.5 L684 238.68 L686 238.77 L688 238.96 L690 239.26 L692 239.95 L694 239.92 L696 240.29 L698 240.65 L700 240.71 L702 241.15 L704 241.47 L706 242.03 L708 242.12 L710 242.39 L712 243.08 L714 243.1 L716 243.61 L718 243.77 L720 243.72 L722 244.55 L724 245.16 L726 245.96 L728 246.31 L730 247.12 L732 247.12 L734 247.03 L736 247.52 L738 247.15 L740 247.69 L742 247.6 L744 247.8 L746 248.22 L748 248.86 L750 249.29 L752 249.3 L754 250.19 L756 250.79 L758 251.58 L760 251.81 L762 252.05 L764 252.01 L766 252.35 L768 252.06 L770 252.52 L772 252.17 L774 252.18 L776 252.52 L778 252.45 L780 252.27 L782 252.68 L784 252.45 L786 252.97 L788 253.02 L790 253.17 L792 253.18 L794 253.11 L796 253.24 L798 253.34 L800 253.73 L802 253.25 L804 253.73 L806 253.22 L808 253.32 L810 253.36 L812 253.74 L814 253.5 L816 253.43 L818 253.73 L820 253.34 L822 253.38 L824 253.32 L826 253.35 L828 253.25 L830 253.09 L832 253.21 L834 253.5 L836 253.69 L838 254.41 L840 254.6 L842 254.65 L844 254.3 L846 254.46 L848 254.66 L850 254.55 L852 254.28 L854 254.48 L856 254.73 L858 254.34 L860 254.31 L862 254.38 L864 254.62 L866 254.71 L868 254.29 L870 254.29 L872 254.35 L874 254.4 L876 254.51 L878 254.3 L880 254.4 L882 254.36 L884 254.89 L886 254.79 L888 254.46 L890 255.03 L892 254.56 L894 254.78 L896 255.19 L898 255.13 L900 255.14 L902.14 255.32 L904.29 255.53 L906.43 256.15 L908.57 256.19 L910.71 256.61 L912.86 257.08 L915 257.22 L917.14 257.51 L919.29 257.82 L921.43 257.83 L923.57 257.79 L925.71 257.94 L927.86 257.91 L930 257.79 L932 258.06 L934 257.94 L936 258.14 L938 258.24 L940 257.96 L942 258.24 L944 258.55 L946 258.55 L948 258.64 L950 259.13 L952 259.13 L954 258.96 L956 258.82 L958 258.81 L960 258.61 L962 258.61 L964 258.52 L966 258.46 L968 258.68 L970 258.38 L972 258.6 L974 258.84 L976 258.83 L978 258.8 L980 258.6 L982 258.73 L984 258.77 L986 258.9 L988 258.8 L990 258.98 L992 259.16 L994 258.73 L996 259.04 L998 259.14 L1000 258.93 L1002 258.96 L1004 259.22 L1006 258.62 L1008 258.89 L1010 258.63 L1012 258.97 L1014 259.03 L1016 258.74 L1018 258.46 L1020 258.71 L1022 258.66 L1024 258.73 L1026 258.57 L1028 258.62 L1030 258.7 L1032 258.57 L1034 258.57 L1036 258.95 L1038 258.57 L1040 258.91 L1042 258.8 L1044 259.08 L1046 258.75 L1048 259.33 L1050 259.01 L1052 258.89 L1054 259.08 L1056 259.22 L1058 259.05 L1060 259.35 L1062 259.41 L1064 259.64 L1066 259.49 L1068 259.5 L1070 259.53 L1072 259.9 L1074 260.08 L1076 259.9 L1078 259.77 L1080 260.18 L1082 259.86 L1084 259.68 L1086 259.55 L1088 259.87 L1090 259.81 L1092 259.63 L1094 259.46 L1096 259.44 L1098 259.16 L1100 259.53 L1102 259.09 L1104 259.18 L1106 259.22 L1108 259.14 L1110 258.86 L1112 258.68 L1114 258.75 L1116 258.43 L1118 258.78 L1120 258.41 L1122 258.71 L1124 258.36 L1126 258.43 L1128 258.35 L1130 258.46 L1132 258.31 L1134 258.2 L1136 258.63 L1138 258.37 L1140 258.35 L1142 258.43 L1144 258.59 L1146 258.61 L1148 258.78 L1150 258.85 L1152 258.72 L1154 259.11 L1156 259.11 L1158 258.68 L1160 259.2 L1162 259.29 L1164 259.27 L1166 258.93 L1168 259.4 L1170 259.33 L1172 259.01 L1174 259.06 L1176 259.67 L1178 259.54 L1180 259.35 L1182 259.31 L1184 259.39 L1186 259.49 L1188 259.87 L1190 259.66 L1192 259.59 L1194 260.09 L1196 260.08 L1198 259.75 L1200 260.23 L1202 260.04 L1204 260.12 L1206 260.03 L1208 260.14 L1210 260.05 L1212 260.05 L1214 259.64 L1216 259.92 L1218 259.79 L1220 259.9 L1222 259.69 L1224 259.93 L1226 259.71 L1228 259.51 L1230 259.47 L1232 259.38 L1234 259.57 L1236 259.29 L1238 259.51 L1240 259.29 L1242 259.49 L1244 259.5 L1246 259.52 L1248 259.72 L1250 259.2 L1252 259.7 L1254 259.48 L1256 259.54 L1258 259.6 L1260 259.7 L1262 259.42 L1264 259.45 L1266 259.78 L1268 259.25 L1270 259.58 L1272 259.58 L1274 259.22 L1276 259.57 L1278 259.61 L1280 259.76 L1282 259.6 L1284 260.19 L1286 260.11 L1288 260.29 L1290 260.74 L1292 260.42 L1294 261.03 L1296 261.18 L1298 261.2 L1300 261.72 L1302 261.41 L1304 261.46 L1306 261.48 L1308 261.61 L1310 261.26 L1312 261.39 L1314 261.37 L1316 261.43 L1318 261.58 L1320 261.25 L1322 261.56 L1324 261.29 L1326 261.34 L1328 261.19 L1330 261.32 L1332 261.58 L1334 261.38 L1336 261.45 L1338 261.16 L1340 261.14 L1342 261.12 L1344 261.28 L1346 261.29 L1348 261.37 L1350 260.91 L1352 261.31 L1354 261.39 L1356 261.18 L1358 260.87 L1360 261.01 L1362 260.82 L1364 260.91 L1366 261.34 L1368 261.14 L1370 261.16 L1372 261.22 L1374 261.28 L1376 261.09 L1378 261.08 L1380 261.08 L1382 261.17 L1384 261.16 L1386 261.26 L1388 261.03 L1390 261.35 L1392 261.27 L1394 261.51 L1396 261.16 L1398 261.26 L1400 261.22 L1402 261.71 L1404 261.85 L1406 261.74 L1408 261.62 L1410 261.94 L1412 261.97 L1414 261.89 L1416 261.75 L1418 261.83 L1420 261.95 L1422 261.69 L1424 261.56 L1426 261.49 L1428 261.46 L1430 260.73 L1432 260.84 L1434 260.32 L1436 260.17 L1438 260.39 L1440 260.05 L1442 260.23 L1444 259.93 L1446 259.66 L1448 259.87 L1450 259.97 L1452 260.16 L1454 260.17 L1456 259.85 L1458 259.8 L1460 259.59 L1462 259.9 L1464 259.63 L1466 259.57 L1468 259.48 L1470 259.45 L1472 259.84 L1474 259.49 L1476 259.98 L1478 259.44 L1480 259.89 L1482 259.43 L1484 259.34 L1486 259.75 L1488 259.45 L1490 259.72 L1492 259.38 L1494 259.28 L1496 259.7 L1498 259.64 L1500 259.71 L1502 259.74 L1504 259.45 L1506 259.88 L1508 260.03 L1510 259.98 L1512 260.36 L1514 260.05 L1516 260.58 L1518 260.53 L1520 260.21 L1522 260.31 L1524 260.79 L1526 260.99 L1528 260.65 L1530 260.89 L1532 261.14 L1534 260.8 L1536 261.22 L1538 260.99 L1540 260.74 L1542 260.92 L1544 261.04 L1546 260.96 L1548 261.11 L1550 260.79 L1552 261.18 L1554 260.92 L1556 261.09 L1558 261.08 L1560 260.95 L1562 260.93 L1564 261.17 L1566 261.27 L1568 261.17 L1570 261.04 L1572 260.88 L1574 260.74 L1576 261.28 L1578 261.12 L1580 261.2 L1582 260.85 L1584 260.96 L1586 261.14 L1588 261 L1590 260.81 L1592 260.59 L1594 260.61 L1596 260.83 L1598 260.48 L1600 260.61 L1602 260.64 L1604 260.89 L1606 260.91 L1608 260.67 L1610 260.58 L1612 260.81 L1614 260.98 L1616 261.15 L1618 261.36 L1620 261.48 L1622 261.05 L1624 261.6 L1626 261.66 L1628 261.77 L1630 261.67 L1632 261.56 L1634 261.99 L1636 262.03 L1638 262.04 L1640 262.25 L1642 261.91 L1644 261.75 L1646 262.03 L1648 262.18 L1650 261.82 L1652 262.15 L1654 262.26 L1656 261.84 L1658 262.06 L1660 262.11 L1662 261.98 L1664 261.82 L1666 261.85 L1668 262.15 L1670 262.17 L1672 261.98 L1674 261.75 L1676 262.18 L1678 262.16 L1680 261.84 L1682 262.05 L1684 262.24 L1686 262.23 L1688 262.01 L1690 261.99 L1692 262.05 L1694 261.81 L1696 261.82 L1698 261.81 L1700 262.12 L1702.04 261.93 L1704.08 262.06 L1706.12 261.98 L1708.16 262.06 L1710.2 261.85 L1712.24 261.8 L1714.28 262.38 L1716.32 262.02 L1718.36 261.87 L1720.4 262.2 L1722.44 262.3 L1724.48 261.94 L1726.52 262.21 L1728.56 262.07 L1730.6 262.19 L1732.64 261.9 L1734.68 261.92 L1736.72 262.51 L1738.76 262.45 L1740.8 262.23 L1742.84 262.29 L1744.88 262.12 L1746.92 262.44 L1748.96 262.24 L1751 262.3" fill="none" stroke="#fafa10" stroke-width="2" shape-rendering="crispEdges"/>
<path d="M3 949.77 L5.04 949.66 L7.08 949.69 L9.12 949.78 L11.16 949.35 L13.2 949.22 L15.24 949.32 L17.28 949.31 L19.32 949.25 L21.36 949.23 L23.4 949.53 L25.44 949.72 L27.48 949.47 L29.52 949.77 L31.56 949.75 L33.6 949.24 L35.64 949.56 L37.68 949.44 L39.72 949.27 L41.76 949.78 L43.8 949.35 L45.84 949.54 L47.88 949.58 L49.92 949.77 L51.96 949.6 L54 949.44 L55 936.97 L56 958.8 L57 945.28 L58 952.3 L60 946.83 L62 949.72 L63 954.85 L64 968.91 L65 952.24 L66 966.24 L67 956.2 L68 961.73 L69 957.17 L71 956.46 L73 955.75 L75 955.29 L77 954.33 L79 953.99 L81 953.95 L83 953.66 L85 953.11 L87 952.58 L89 952.45 L91 952.25 L93 951.56 L95 951.39 L97.14 951.14 L99.29 950.85 L101.43 950.85 L103.57 950.44 L105.71 950.27 L107.86 950 L110 950.11 L112 949.63 L114 949.98 L116 949.59 L118 949.42 L120 949.88 L122 949.38 L124 949.74 L126 949.62 L128 949.56 L130 949.03 L132 949.14 L134 948.86 L136 949.28 L138 949.16 L140 948.95 L142 948.77 L144 948.63 L146 948.84 L148 948.56 L150 948.58 L152 948.29 L154 948.33 L156 948.23 L158 948.63 L160 948.53 L162 948.29 L164 948.72 L166 948.36 L168 948.45 L170 948.29 L172 948.36 L174 948.7 L176 948.4 L178 948.3 L180 948.49 L182.14 948.32 L184.29 948.6 L186.43 948.05 L188.57 948.5 L190.71 947.88 L192.86 948.31 L195 948.1 L198 945.83 L200 939.99 L202.5 934.87 L205 929.85 L207.5 927.57 L210 925.42 L212 925.09 L214 924.4 L216 923.66 L218 922.46 L220 921.87 L222 921.44 L224 920.13 L226 919.74 L228 918.68 L230 918.29 L232 915.71 L234 914.18 L236 911.9 L238 909.78 L240 907.7 L242 905.6 L244 902.82 L246 900.01 L248 897.56 L250 895.25 L252 891.83 L254 889.04 L256 885.78 L258 882.81 L260 880.16 L262 877.33 L264 874.22 L266 871.35 L268 868.55 L270 866.07 L272 863.6 L274 861.06 L276 858.62 L278 856.47 L280 854.12 L282 852.59 L284 850.85 L286 849.02 L288 847.34 L290 846.14 L292 844.44 L294 843.13 L296 841.23 L298 840.19 L300 838.4 L302 837.62 L304 836.55 L306 835.25 L308 833.88 L310 833.33 L312 831.99 L314 832.89 L316 833.19 L318 833.81 L320 834.45 L322 834.42 L324 831.82 L326 829.47 L328 827.13 L330 824.3 L332 822.09 L334 819.53 L336 817.05 L338 814.29 L340 812.13 L342 810.09 L344 808.02 L346 805.59 L348 803.73 L350 801.43 L352 798.53 L354 794.99 L356 792.35 L358 789.27 L360 791 L362 793.01 L364 795.02 L366 792.52 L368 789.71 L370 787.78 L372 784.83 L374 784.48 L376 784.09 L378 783.85 L380 788.69 L382 792.72 L384 788.26 L385 808.12 L387.5 816.82 L390 825.71 L392 849.66 L393 871.05 L395 874.01 L396 899.72 L397 921.56 L400 933.22 L402.5 935.88 L405 938.23 L407.5 939.22 L410 940.4 L412 942.7 L414 944.87 L416 944.27 L418 943.94 L420 943.28 L422 943.9 L424 944.4 L426 944.31 L428 944.9 L430 945.35 L432 945.34 L434 946.08 L436 946.48 L438 946.49 L440 946.85 L442.5 948.85 L445 950.42 L447.14 949.94 L449.29 949.86 L451.43 949.37 L453.57 948.7 L455.71 948.24 L457.86 947.9 L460 947.56 L462 947.97 L464 947.95 L466 948.1 L468 948.13 L470 948.23 L472 947.84 L474 948.21 L476 948.55 L478 948.63 L480 948.3 L482 948.49 L484 948.7 L486 948.62 L488 948.81 L490 948.62 L492 948.92 L494 949.05 L496 948.84 L498 949 L500 949.58 L502 949.54 L504 949.71 L506 949.6 L508 949.77 L510 949.89 L512 949.96 L514 949.52 L516 949.96 L518 949.81 L520 950.13 L522 949.96 L524 950.19 L526 950.49 L528 950.38 L530 950.23 L532 950.46 L534 950.48 L536 950.87 L538 950.54 L540 950.62 L542 950.9 L544 950.66 L546 951.01 L548 951.3 L550 951.11 L552.14 951.62 L554.29 952.39 L556.43 953.09 L558.57 953.52 L560.71 954.16 L562.86 954.82 L565 955.58 L567.06 955.66 L569.12 955.61 L571.18 955.6 L573.24 955.52 L575.29 955.82 L577.35 956.01 L579.41 955.89 L581.47 955.88 L583.53 955.95 L585.59 955.7 L587.65 956.02 L589.71 955.89 L591.76 955.96 L593.82 956.01 L595.88 955.95 L597.94 955.87 L600 955.85 L602 955.43 L604 955.21 L606 954.73 L608 954.45 L610 953.71 L612.06 953.88 L614.12 954.16 L616.18 953.75 L618.24 953.92 L620.29 953.85 L622.35 953.69 L624.41 954.09 L626.47 953.64 L628.53 953.9 L630.59 953.5 L632.65 953.42 L634.71 953.87 L636.76 953.58 L638.82 953.33 L640.88 953.49 L642.94 953.49 L645 953.64 L647.5 952.77 L650 952.34 L652.14 952.99 L654.29 953.07 L656.43 952.94 L658.57 953.26 L660.71 953.48 L662.86 953.89 L665 954.07 L667 954.21 L669 954.19 L671 954.01 L673 954.14 L675 954.15 L677 954.16 L679 953.99 L681 954.17 L683 954.13 L685 954.25 L687 953.78 L689 954.22 L691 953.7 L693 954.16 L695 954.05 L697 954 L699 954.28 L701 954.04 L703 953.95 L705 954.17 L707 954.22 L709 954.06 L711 953.93 L713 953.97 L715 953.97 L717 954.13 L719 953.88 L721 953.93 L723 954.03 L725 953.93 L727.5 952.89 L730 952.17 L732.14 952.5 L734.29 952.57 L736.43 952.82 L738.57 952.95 L740.71 953.31 L742.86 953.5 L745 954.05 L747.04 954.05 L749.07 953.75 L751.11 954.25 L753.15 953.89 L755.19 954.21 L757.22 954.2 L759.26 954.28 L761.3 953.82 L763.33 953.96 L765.37 954.25 L767.41 953.71 L769.44 953.73 L771.48 954.04 L773.52 954 L775.56 954.25 L777.59 954.16 L779.63 954.02 L781.67 954.3 L783.7 954.01 L785.74 954.01 L787.78 954.11 L789.81 953.93 L791.85 953.91 L793.89 954.06 L795.93 953.91 L797.96 954.27 L800 954.11 L801 958.02 L802 954.76 L804 954.98 L806 955.05 L808 955.2 L810 955.27 L812 955.51 L814 955.61 L816 955.38 L818 955.41 L820 955.57 L822 955.76 L824 955.33 L826 955.41 L828 955.54 L830 955.11 L832 955.17 L834 955.52 L836 955.4 L838 955.17 L840 954.89 L842 955.32 L844 955.16 L846 955.2 L848 955.27 L850 955.17 L852 954.85 L854 954.66 L856 954.7 L858 954.79 L860 954.75 L862 954.53 L864 954.48 L866 954.72 L868 954.66 L870 954.47 L872 954.82 L874 954.57 L876 954.18 L878 954.36 L880 954.55 L882 954.22 L884 954.41 L886 953.96 L888 954.11 L890 954.39 L892 954.2 L894 954.21 L896 953.89 L898 954.04 L900 954.03 L902.14 953.43 L904.29 953.23 L906.43 952.73 L908.57 952.58 L910.71 951.9 L912.86 951.38 L915 950.77 L917.02 950.75 L919.05 951.06 L921.07 950.62 L923.1 950.57 L925.12 950.56 L927.14 950.73 L929.17 950.86 L931.19 950.69 L933.21 950.76 L935.24 950.26 L937.26 950.18 L939.29 950.59 L941.31 950.27 L943.33 950.46 L945.36 950.2 L947.38 950.04 L949.4 950.05 L951.43 949.9 L953.45 950.34 L955.48 950.1 L957.5 949.91 L959.52 949.92 L961.55 949.84 L963.57 949.59 L965.6 950.04 L967.62 949.81 L969.64 949.99 L971.67 949.63 L973.69 949.69 L975.71 949.42 L977.74 949.25 L979.76 949.73 L981.79 949.64 L983.81 949.27 L985.83 949.57 L987.86 949.48 L989.88 949.12 L991.9 949.25 L993.93 949.42 L995.95 949.09 L997.98 949.32 L1000 948.85 L1002 948.88 L1004 949.03 L1006 948.68 L1008 948.69 L1010 948.98 L1012 948.69 L1014 948.83 L1016 948.45 L1018 948.35 L1020 948.42 L1022 948.26 L1024 948.68 L1026 948.22 L1028 948.34 L1030 948.02 L1032 948.22 L1034 948.08 L1036 948.04 L1038 947.79 L1040 947.77 L1042 948.15 L1044 947.81 L1046 947.7 L1048 947.61 L1050 947.62 L1052 947.54 L1054 947.37 L1056 947.7 L1058 947.45 L1060 947.29 L1062 947.57 L1064 947.16 L1066 947.21 L1068 947.5 L1070 947.03 L1072 947.17 L1074 947.35 L1076 947.28 L1078 946.85 L1080 946.91 L1082 947.11 L1084 946.89 L1086 947.22 L1088 946.74 L1090 947.17 L1092 946.88 L1094 946.7 L1096 946.81 L1098 946.6 L1100 946.92 L1102 946.64 L1104 947 L1106 946.79 L1108 946.64 L1110 946.55 L1112 946.74 L1114 946.49 L1116 946.86 L1118 946.39 L1120 946.61 L1122 946.61 L1124 946.42 L1126 946.7 L1128 946.45 L1130 946.59 L1132.5 945.54 L1135 944.39 L1137.03 944.43 L1139.06 944.25 L1141.09 944.31 L1143.12 944.71 L1145.16 944.39 L1147.19 944.6 L1149.22 944.27 L1151.25 944.54 L1153.28 944.42 L1155.31 944.5 L1157.34 944.38 L1159.38 944.24 L1161.41 944.39 L1163.44 944.34 L1165.47 944.28 L1167.5 944.63 L1169.53 944.37 L1171.56 944.44 L1173.59 944.75 L1175.62 944.66 L1177.66 944.73 L1179.69 944.72 L1181.72 944.28 L1183.75 944.37 L1185.78 944.22 L1187.81 944.61 L1189.84 944.6 L1191.88 944.41 L1193.91 944.45 L1195.94 944.6 L1197.97 944.62 L1200 944.35 L1202.14 944.35 L1204.29 943.7 L1206.43 943.51 L1208.57 942.88 L1210.71 942.48 L1212.86 942.6 L1215 942.14 L1217.03 942.1 L1219.06 941.66 L1221.09 941.63 L1223.12 941.67 L1225.16 941.66 L1227.19 941.69 L1229.22 941.71 L1231.25 941.47 L1233.28 941.61 L1235.31 941.77 L1237.34 941.46 L1239.38 941.83 L1241.41 941.64 L1243.44 941.69 L1245.47 941.38 L1247.5 941.46 L1249.53 941.58 L1251.56 941.35 L1253.59 941.11 L1255.62 941.58 L1257.66 941.51 L1259.69 941.18 L1261.72 941.01 L1263.75 941.46 L1265.78 941.28 L1267.81 940.92 L1269.84 941 L1271.88 940.89 L1273.91 941.27 L1275.94 940.89 L1277.97 941.28 L1280 941.15 L1282.14 940.39 L1284.29 940.4 L1286.43 939.86 L1288.57 939.72 L1290.71 939.41 L1292.86 938.73 L1295 938.25 L1297.03 938.77 L1299.06 938.45 L1301.09 938.76 L1303.12 938.61 L1305.16 938.64 L1307.19 938.7 L1309.22 938.58 L1311.25 938.47 L1313.28 938.23 L1315.31 938.62 L1317.34 938.46 L1319.38 938.51 L1321.41 938.76 L1323.44 938.28 L1325.47 938.66 L1327.5 938.23 L1329.53 938.62 L1331.56 938.68 L1333.59 938.36 L1335.62 938.53 L1337.66 938.78 L1339.69 938.58 L1341.72 938.53 L1343.75 938.35 L1345.78 938.24 L1347.81 938.41 L1349.84 938.45 L1351.88 938.32 L1353.91 938.39 L1355.94 938.28 L1357.97 938.62 L1360 938.6 L1362 937.94 L1364 937.55 L1366 937.31 L1368 936.87 L1370 936.76 L1372 936.45 L1374 936.46 L1376 936.85 L1378 936.45 L1380 936.74 L1382 936.64 L1384 936.97 L1386 936.85 L1388 937.02 L1390 936.7 L1392 937.04 L1394 937.04 L1396 937 L1398 937.22 L1400 937.3 L1402 936.91 L1404 937.05 L1406 937.14 L1408 937.08 L1410 937.04 L1412 937.21 L1414 937.2 L1416 937.54 L1418 937.43 L1420 937.27 L1422 937.23 L1424 937.15 L1426 936.92 L1428 936.63 L1430 936.41 L1432 936.21 L1434 936.63 L1436 936.32 L1438 935.75 L1440 935.96 L1442 935.95 L1444 935.54 L1446 935.1 L1448 935.16 L1450 934.96 L1452 934.83 L1454 935.07 L1456 934.76 L1458 935.33 L1460 935.19 L1462 935.2 L1464 935.4 L1466 935.25 L1468 935.03 L1470 935.05 L1472 935 L1474 934.96 L1476 935.42 L1478 935.48 L1480 935.18 L1482 935.13 L1484 935.42 L1486 935.57 L1488 935.64 L1490 935.2 L1492 935.59 L1494 935.64 L1496 935.61 L1498 935.38 L1500 935.31 L1502 935.5 L1504 934.99 L1506 934.82 L1508 934.73 L1510 934.42 L1512 934.5 L1514 933.94 L1516 933.62 L1518 933.74 L1520 933.58 L1522 933.49 L1524 933.22 L1526 933.14 L1528 932.97 L1530 932.5 L1532 932.44 L1534 932.17 L1536 932.2 L1538 932.31 L1540 931.95 L1542 932.25 L1544 931.88 L1546 931.99 L1548 932.24 L1550 931.65 L1552 931.56 L1554 931.74 L1556 931.53 L1558 931.79 L1560 931.3 L1562 931.74 L1564 931.69 L1566 931.59 L1568 931.32 L1570 931.17 L1572 931.34 L1574 931.19 L1576 931.07 L1578 930.96 L1580 930.96 L1582 931.02 L1584 931.05 L1586 931.02 L1588 930.5 L1590 930.5 L1592 930.52 L1594 930.51 L1596 930.31 L1598 930.14 L1600 930 L1602 930.07 L1604 930.08 L1606 930.31 L1608 930.2 L1610 930.09 L1612 930.08 L1614 930 L1616 929.72 L1618 929.76 L1620 929.24 L1622 929.53 L1624 929.42 L1626 929.15 L1628 929.24 L1630 929.4 L1632 929.04 L1634 929.06 L1636 928.78 L1638 928.73 L1640 928.98 L1642 928.39 L1644 928.41 L1646 928.63 L1648 928.42 L1650 928.13 L1652 928.4 L1654 928.15 L1656 928.2 L1658 928.02 L1660 928.02 L1662 927.96 L1664 927.79 L1666 927.54 L1668 927.51 L1670 927.86 L1672 927.58 L1674 927.24 L1676 927.62 L1678 927.18 L1680 927.01 L1682 927.19 L1684 926.95 L1686 927.02 L1688 926.98 L1690 926.71 L1692 926.84 L1694 926.49 L1696 926.66 L1698 926.63 L1700 926.25 L1702.04 926.38 L1704.08 926.12 L1706.12 926.28 L1708.16 926.48 L1710.2 926.23 L1712.24 926.27 L1714.28 926.23 L1716.32 925.79 L1718.36 926.25 L1720.4 926.03 L1722.44 925.6 L1724.48 925.98 L1726.52 925.66 L1728.56 925.46 L1730.6 925.88 L1732.64 925.58 L1734.68 925.64 L1736.72 925.2 L1738.76 925.53 L1740.8 925.03 L1742.84 925.08 L1744.88 925.1 L1746.92 924.83 L1748.96 925.12 L1751 925" fill="none" stroke="#742d92" stroke-width="1.5" shape-rendering="crispEdges"/>
<g font-size="18.5" letter-spacing="0.55">
<text x="102" y="178.5" fill="#e3e32a">U_loop,coil</text>
<text x="102" y="412.5" fill="#86c234">U_Photod</text>
<text x="54" y="740" fill="#de8d2e">B_t</text>
<text x="62.5" y="955" fill="#80379e" letter-spacing="0">Ip</text>
</g>
<path d="M9 161.5 H78 L84 174.75 L78 188 H9 Q6.5 188 6.5 185.5 V164 Q6.5 161.5 9 161.5 Z" fill="#1c1a07" stroke="#e3e32a" stroke-width="1.6"/><path d="M32.8 161.5 V188" stroke="#e3e32a" stroke-width="1.6"/><text x="19.5" y="179.05" fill="#e3e32a" font-size="12" text-anchor="middle">C 1</text><text x="57" y="179.05" fill="#e3e32a" font-size="12" text-anchor="middle">20 V</text>
<path d="M9 395.3 H78 L84 408.55 L78 421.8 H9 Q6.5 421.8 6.5 419.3 V397.8 Q6.5 395.3 9 395.3 Z" fill="#111a07" stroke="#86c234" stroke-width="1.6"/><path d="M32.8 395.3 V421.8" stroke="#86c234" stroke-width="1.6"/><text x="19.5" y="412.85" fill="#86c234" font-size="12" text-anchor="middle">C 4</text><text x="57" y="412.85" fill="#86c234" font-size="12" text-anchor="middle">200 mV</text>
<path d="M3 735.5H6M42 735.5H54" stroke="#f39a2a" stroke-width="1.3"/>
<path d="M9.5 722.6 H29.5 L41.5 735.1 L29.5 747.6 H9.5 Q6.5 747.6 6.5 744.6 V725.6 Q6.5 722.6 9.5 722.6 Z" fill="#24180a" stroke="#f39a2a" stroke-width="1.5"/><text x="22" y="739.4" fill="#f39a2a" font-size="12" text-anchor="middle">M 1</text>
<path d="M3 949.5H6M42 949.5H54" stroke="#742d92" stroke-width="1.3"/>
<path d="M9.5 936.6 H29.5 L41.5 949.1 L29.5 961.6 H9.5 Q6.5 961.6 6.5 958.6 V939.6 Q6.5 936.6 9.5 936.6 Z" fill="#732c8c" stroke="#732c8c" stroke-width="1.5"/><text x="22" y="953.4" fill="#fff" font-size="12" text-anchor="middle">M 2</text>
<path d="M45 58H65L55 67.5Z" fill="#f28c1c"/>
<path d="M45.8 68.8H64.2V88.5H58.5L55 95L51.5 88.5H45.8Z" fill="#000" stroke="#f28c1c" stroke-width="1.6"/>
<text x="55.2" y="83.6" fill="#f28c1c" font-size="14.5" font-weight="bold" text-anchor="middle">T</text>
<rect x="1726.2" y="75" width="18" height="15" fill="#000"/>
<path d="M1712 65.2H1742.5Q1744.3 65.2 1744.3 67V97L1710.5 65.2Z" fill="#4f4f4f"/>
<circle cx="1737" cy="71.5" r="4.2" fill="none" stroke="#8a8a8a" stroke-width="1.5"/>
<path d="M1734 74.5L1728.5 80" stroke="#8a8a8a" stroke-width="2.2" stroke-linecap="round"/>
</svg>
<div class="a" style="left:1769px;top:29px;width:151px;height:967px;box-sizing:border-box;border-left:1px solid #6e665f;border-top:1px solid #6e665f;border-bottom:1px solid #6e665f;background:#2f2f2f"></div>
<div class="a" style="left:1760px;top:501.7px;width:4px;height:4px;border-radius:2px;background:#cfcfcf"></div>
<div class="a" style="left:1760px;top:510.2px;width:4px;height:4px;border-radius:2px;background:#cfcfcf"></div>
<div class="a" style="left:1760px;top:518.8px;width:4px;height:4px;border-radius:2px;background:#cfcfcf"></div>
<svg class="a" style="left:0;top:0" width="1920" height="30">
<g transform="scale(1,1.2)" font-family='"Liberation Sans", sans-serif' font-weight="bold" font-size="26" fill="#fff">
<text x="1785.8" y="21.5">Te</text><text x="1831.3" y="21.5">tronix</text></g>
<rect x="1815.2" y="4.1" width="4.8" height="21.7" fill="#fff"/>
<path d="M1822.3 17.8L1825.6 13.6L1829.6 25.8H1824.6Z" fill="#fff"/>
<path d="M1831.6 11.5L1836 4.4V11.5Z" fill="#fff"/>
<path d="M1815 25.8H1819.8L1830.9 9.2H1826Z" fill="#1ec0e0"/>
</svg>
<div class="a" style="left:1770px;top:30px;width:150px;text-align:center;font-weight:bold;font-size:15px;letter-spacing:0.7px;color:#e8e8e8">Add New...</div>
<div class="a sbtn" style="left:1778px;top:54px"><div style="line-height:33px">Cursors</div></div>
<div class="a sbtn" style="left:1850px;top:54px"><div style="line-height:33px">Callout</div></div>
<div class="a sbtn" style="left:1778px;top:100px"><div style="line-height:33px">Measure</div></div>
<div class="a sbtn" style="left:1850px;top:100px"><div style="line-height:33px">Search</div></div>
<div class="a sbtn" style="left:1778px;top:146px"><div style="line-height:16px;padding-top:1px">Results<br>Table</div></div>
<div class="a sbtn" style="left:1850px;top:146px"><div style="line-height:33px">Plot</div></div>
<div class="a" style="left:1773px;top:189px;width:144px;height:1px;background:#6e665f"></div>
<div class="a sbtn" style="left:1778px;top:196px"><svg width="63" height="37" style="display:block">
<rect x="20.5" y="6.5" width="22" height="19.5" fill="none" stroke="#a9a9a9" stroke-width="1.6" stroke-dasharray="2.4 2.6"/>
<circle cx="33.2" cy="14.2" r="4.6" fill="none" stroke="#a9a9a9" stroke-width="1.7"/>
<path d="M29.8 17.6L25.6 21.6" stroke="#a9a9a9" stroke-width="2.4" stroke-linecap="round"/>
<path d="M37 22L45 28.5L41.8 28.9L43.8 32.3L42.3 33.1L40.3 29.6L38 31.6Z" fill="#a9a9a9"/>
</svg></div>
<div class="a sbtn" style="left:1850px;top:196px"><div style="line-height:33px">More...</div></div>
<div class="a" style="left:1773px;top:241px;width:144px;height:1px;background:#6e665f"></div>
<div class="a chb" style="left:3px;background:#c9c9c9"><div class="chh" style="background:#4b4522;color:#f2f22a">Ch 1</div><div class="chl" style="background:#a9a9a9"></div><div class="chr" style="top:20px">5 V/div</div><div class="chr" style="top:39px">1 M&Omega;</div><div class="chr" style="top:58px">200 kHz</div><div class="bw">B<span>w</span></div></div>
<div class="a chb" style="left:98px;background:#8d8d8d;color:#262626"><div class="chh" style="background:#267f82;color:#1b1b1b">Ch 2</div><div class="chl" style="background:#7a7a7a"></div><div class="chr" style="top:20px">250 mV/div</div><div class="chr" style="top:39px">1 M&Omega;</div><div class="chr" style="top:58px">200 kHz</div><div class="bw">B<span>w</span></div></div>
<div class="a chb" style="left:193px;background:#8d8d8d;color:#262626"><div class="chh" style="background:#8c3847;color:#b9b9b9">Ch 3</div><div class="chl" style="background:#7a7a7a"></div><div class="chr" style="top:20px">450 mV/div</div><div class="chr" style="top:39px">1 M&Omega;</div><div class="chr" style="top:58px">200 kHz</div><div class="bw">B<span>w</span></div></div>
<div class="a chb" style="left:288px;background:#c9c9c9"><div class="chh" style="background:#333f22;color:#8ccc28">Ch 4</div><div class="chl" style="background:#a9a9a9"></div><div class="chr" style="top:20px">200 mV/div</div><div class="chr" style="top:39px">1 M&Omega;</div><div class="chr" style="top:58px">200 kHz</div><div class="bw">B<span>w</span></div></div>
<div class="a chb" style="left:383px;background:#c9c9c9"><div class="chh" style="background:#4a3320;color:#f3962a">Math 1</div><div class="chl" style="background:#a9a9a9"></div><div class="chr" style="top:20px">73.3 mT/div</div><div class="chr" style="top:39px">Intg(Ch2)&hellip;</div></div>
<div class="a chb" style="left:478px;background:#c9c9c9"><div class="chh" style="background:#6d2c8a;color:#ffffff">Math 2</div><div class="chl" style="background:#a9a9a9"></div><div class="chr" style="top:20px">243.87 A/div</div><div class="chr" style="top:39px">-Intg(Ch3&hellip;</div></div>
<div class="a abtn" style="left:1023px"><div class="abl" style="background:#f7941d"></div><div style="padding-top:33px;font-size:19px;line-height:22px">5</div></div>
<div class="a abtn" style="left:1068px"><div class="abl" style="background:#2828d8"></div><div style="padding-top:33px;font-size:19px;line-height:22px">6</div></div>
<div class="a" style="left:1118px;top:1000px;width:1px;height:78px;background:#6e665f"></div>
<div class="a abtn" style="left:1129px"><div class="abl" style="background:#b52020"></div><div style="padding-top:20px;line-height:16px">Add<br>New<br>Math</div></div>
<div class="a abtn" style="left:1174px"><div class="abl" style="background:#c4c4d4"></div><div style="padding-top:20px;line-height:16px">Add<br>New<br>Ref</div></div>
<div class="a abtn" style="left:1219px"><div class="abl" style="background:#c860f0"></div><div style="padding-top:20px;line-height:16px">Add<br>New<br>Bus</div></div>
<div class="a" style="left:1269px;top:1000px;width:1px;height:78px;background:#6e665f"></div>
<div class="a ip" style="left:1281px;width:198px"><div class="iph">Horizontal</div><div class="ipl"></div><div class="ipr" style="left:4px;top:19px">4.5 ms/div</div><div class="ipr" style="left:110px;top:19px">45 ms</div><div class="ipr" style="left:4px;top:38px">SR: 1 MS/s</div><div class="ipr" style="left:111px;top:38px">1 &mu;s/pt</div><div class="ipr" style="left:4px;top:57px">RL: 45 kpts</div><div class="ipr" style="left:110px;top:57px"><svg width="12" height="15" style="position:absolute;left:-1px;top:3px"><path d="M1 1H10.5V10H7.5L5.75 13.5L4 10H1Z" fill="#000" stroke="#f28c1c" stroke-width="1.8"/><text x="5.75" y="9" font-size="8" font-weight="bold" fill="#fff" text-anchor="middle" font-family='"Liberation Sans", sans-serif'>T</text></svg><span style="margin-left:15px">3%</span></div></div>
<div class="a ip" style="left:1486px;width:158px"><div class="iph">Trigger</div><div class="ipl"></div><div class="ipr" style="left:0px;top:19px"><div style="position:absolute;left:4px;top:2px;width:28px;height:15px;border-radius:5px;background:#2323c4;border:1px solid #101040;color:#fff;text-align:center;line-height:15px;font-size:14px">6</div><svg width="20" height="16" style="position:absolute;left:44px;top:2px"><path d="M1 12.5H4.5L12.5 3.5H16.5" fill="none" stroke="#3a3a9a" stroke-width="1.3"/></svg><div style="position:absolute;left:70px;top:0">3 V</div></div></div>
<div class="a ip" style="left:1651px;width:148px"><div class="iph">Acquisition</div><div class="ipl"></div><div class="ipr" style="left:4px;top:19px">Manual,</div><div class="ipr" style="left:85px;top:19px">Analyze</div><div class="ipr" style="left:4px;top:38px">High Res: 16 bits</div><div class="ipr" style="left:4px;top:57px">Single: 0 /1</div></div>
<div class="a" style="left:1811px;top:1000px;width:1px;height:78px;background:#6e665f"></div>
<div class="a" style="left:1822px;top:999px;width:89px;height:35px;box-sizing:border-box;border:1px solid #5e6b6b;border-radius:7px;background:#fe1d25;color:#fff;font-weight:bold;font-size:13.5px;letter-spacing:0.4px;text-align:center;line-height:33px">Preview</div>
<div class="a" style="left:1822px;top:1040px;width:90px;height:38px;border-radius:6px;background:#c9c9c9;color:#000;font-size:14px;text-align:center;line-height:17.5px;padding-top:2px;box-sizing:border-box">28 May 2025<br>4:42:32 PM</div>
</body></html>
